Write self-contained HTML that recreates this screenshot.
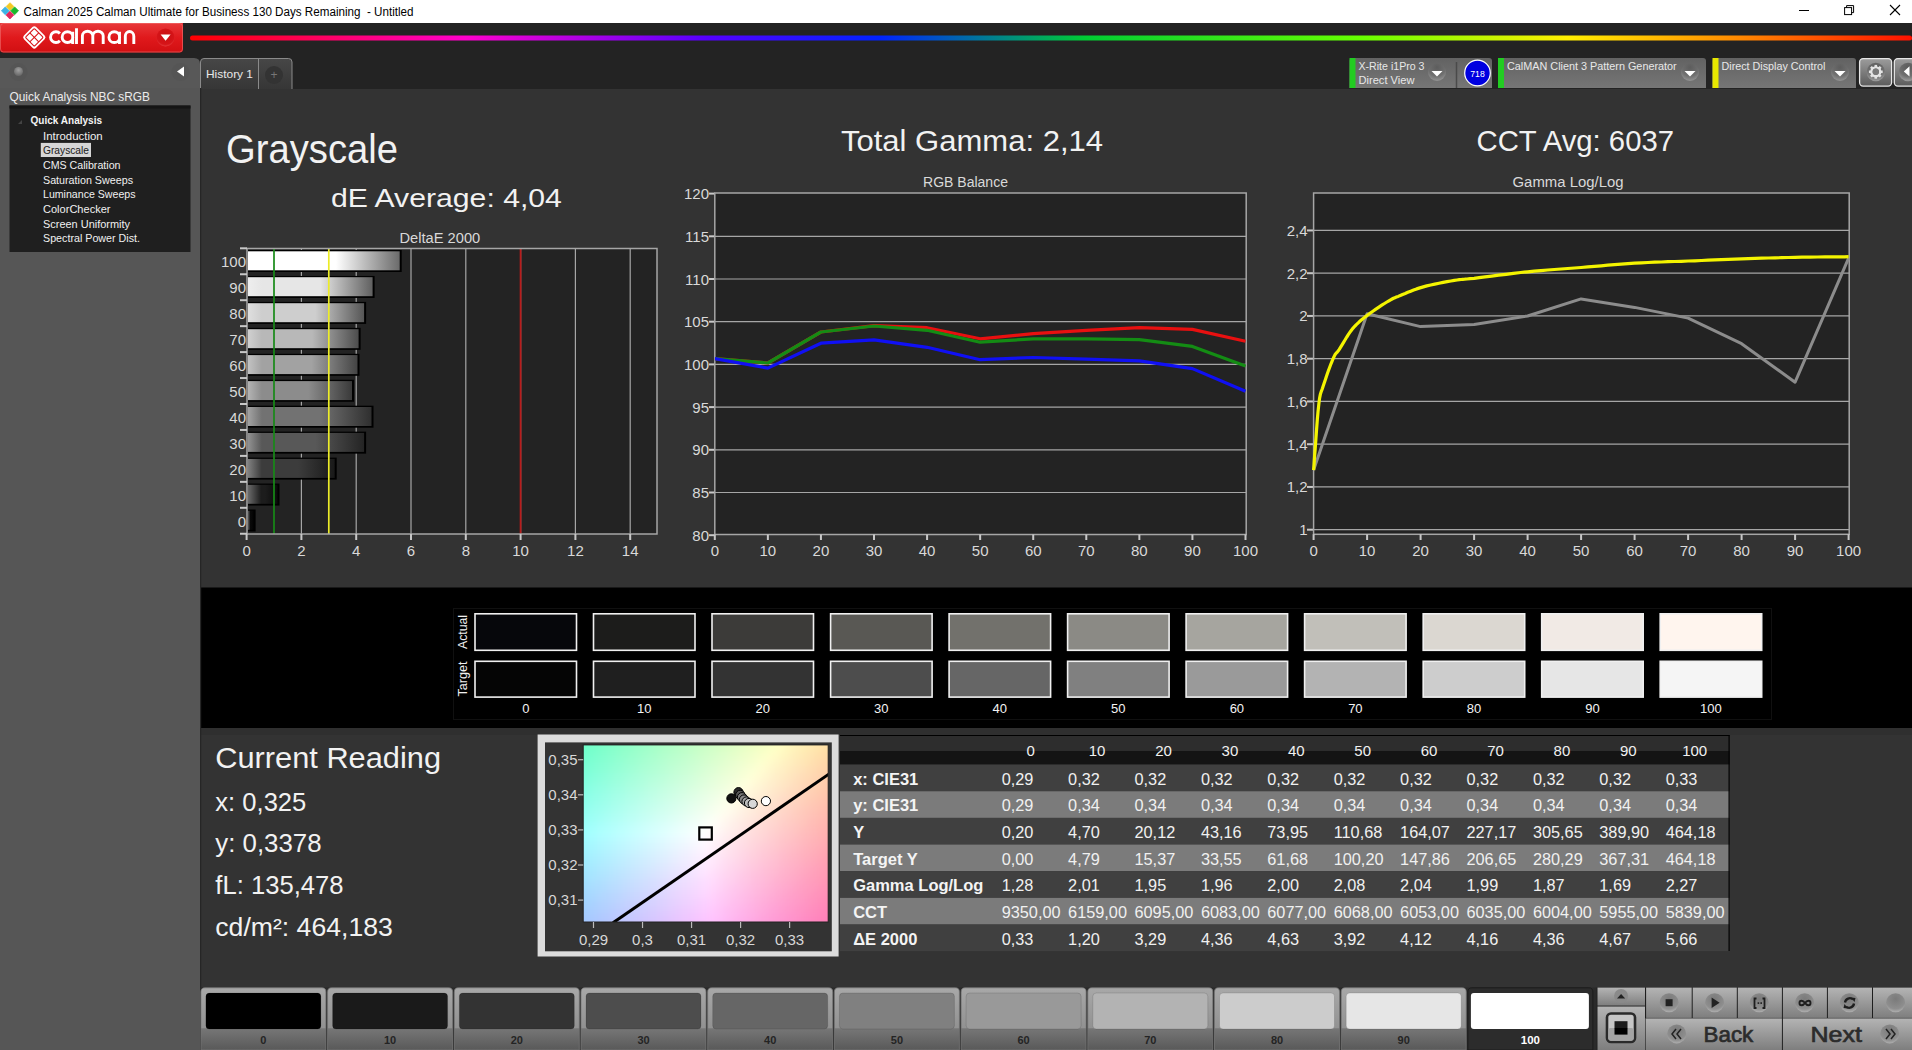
<!DOCTYPE html>
<html><head><meta charset="utf-8"><title>Calman</title>
<style>html,body{margin:0;padding:0;background:#333;overflow:hidden;width:1912px;height:1050px}svg{display:block}text{font-family:"Liberation Sans", sans-serif}</style>
</head><body><svg width="1912" height="1050" viewBox="0 0 1912 1050" font-family='"Liberation Sans", sans-serif'><defs>
<linearGradient id="rainbow" x1="0" x2="1" y1="0" y2="0">
 <stop offset="0" stop-color="#ff0000"/>
 <stop offset="0.16" stop-color="#ff00cc"/>
 <stop offset="0.30" stop-color="#5500ff"/>
 <stop offset="0.40" stop-color="#0022ff"/>
 <stop offset="0.52" stop-color="#00cc33"/>
 <stop offset="0.68" stop-color="#66ff00"/>
 <stop offset="0.80" stop-color="#ffee00"/>
 <stop offset="0.90" stop-color="#ff8800"/>
 <stop offset="1" stop-color="#ff1100"/>
</linearGradient>
<linearGradient id="redlogo" x1="0" x2="0" y1="0" y2="1">
 <stop offset="0" stop-color="#e8383a"/>
 <stop offset="0.5" stop-color="#e0191c"/>
 <stop offset="1" stop-color="#d10f12"/>
</linearGradient>
<linearGradient id="devbtn" x1="0" x2="0" y1="0" y2="1">
 <stop offset="0" stop-color="#626262"/>
 <stop offset="1" stop-color="#767676"/>
</linearGradient>
<linearGradient id="swbtn" x1="0" x2="0" y1="0" y2="1">
 <stop offset="0" stop-color="#a8a8a8"/>
 <stop offset="0.64" stop-color="#929292"/>
 <stop offset="0.66" stop-color="#767676"/>
 <stop offset="1" stop-color="#595959"/>
</linearGradient>
<linearGradient id="ctlbtn" x1="0" x2="0" y1="0" y2="1">
 <stop offset="0" stop-color="#b4b4b4"/>
 <stop offset="1" stop-color="#7e7e7e"/>
</linearGradient>
<radialGradient id="knob" cx="0.5" cy="0.35" r="0.6">
 <stop offset="0" stop-color="#a0a0a0"/>
 <stop offset="1" stop-color="#6a6a6a"/>
</radialGradient>
<radialGradient id="redknob" cx="0.5" cy="0.4" r="0.6">
 <stop offset="0" stop-color="#c80f12"/><stop offset="0.8" stop-color="#d61418"/><stop offset="1" stop-color="#e53a3c"/>
</radialGradient>
<linearGradient id="tabg" x1="0" x2="0" y1="0" y2="1">
 <stop offset="0" stop-color="#474747"/><stop offset="1" stop-color="#363636"/>
</linearGradient>
<radialGradient id="knob2" cx="0.5" cy="0.3" r="0.75">
 <stop offset="0" stop-color="#7a7a7a"/><stop offset="0.7" stop-color="#8e8e8e"/><stop offset="1" stop-color="#b8b8b8"/>
</radialGradient>
<linearGradient id="cie" x1="0" x2="1" y1="0" y2="0">
 <stop offset="0" stop-color="#8ff0b0"/>
 <stop offset="1" stop-color="#ffd8b0"/>
</linearGradient>
<linearGradient id="gearbtn" x1="0" x2="0" y1="0" y2="1"><stop offset="0" stop-color="#9c9c9c"/><stop offset="1" stop-color="#5c5c5c"/></linearGradient><radialGradient id="knob3" cx="0.5" cy="0.25" r="0.8"><stop offset="0" stop-color="#5a5a5a"/><stop offset="0.6" stop-color="#707070"/><stop offset="1" stop-color="#a6a6a6"/></radialGradient><linearGradient id="bar0" gradientUnits="userSpaceOnUse" x1="248" x2="253.6" y1="0" y2="0"><stop offset="0" stop-color="#5e5e5e"/><stop offset="0.450" stop-color="#080808"/><stop offset="0.58" stop-color="#080808"/><stop offset="1" stop-color="#030303"/></linearGradient><linearGradient id="bar1" gradientUnits="userSpaceOnUse" x1="248" x2="277.5" y1="0" y2="0"><stop offset="0" stop-color="#6b6b6b"/><stop offset="0.445" stop-color="#1c1c1c"/><stop offset="0.58" stop-color="#1c1c1c"/><stop offset="1" stop-color="#0b0b0b"/></linearGradient><linearGradient id="bar2" gradientUnits="userSpaceOnUse" x1="248" x2="334.7" y1="0" y2="0"><stop offset="0" stop-color="#808080"/><stop offset="0.158" stop-color="#3c3c3c"/><stop offset="0.58" stop-color="#3c3c3c"/><stop offset="1" stop-color="#191919"/></linearGradient><linearGradient id="bar3" gradientUnits="userSpaceOnUse" x1="248" x2="364.1" y1="0" y2="0"><stop offset="0" stop-color="#929292"/><stop offset="0.119" stop-color="#585858"/><stop offset="0.58" stop-color="#585858"/><stop offset="1" stop-color="#242424"/></linearGradient><linearGradient id="bar4" gradientUnits="userSpaceOnUse" x1="248" x2="371.5" y1="0" y2="0"><stop offset="0" stop-color="#a3a3a3"/><stop offset="0.112" stop-color="#727272"/><stop offset="0.58" stop-color="#727272"/><stop offset="1" stop-color="#2f2f2f"/></linearGradient><linearGradient id="bar5" gradientUnits="userSpaceOnUse" x1="248" x2="352.0" y1="0" y2="0"><stop offset="0" stop-color="#b4b4b4"/><stop offset="0.132" stop-color="#8c8c8c"/><stop offset="0.58" stop-color="#8c8c8c"/><stop offset="1" stop-color="#3a3a3a"/></linearGradient><linearGradient id="bar6" gradientUnits="userSpaceOnUse" x1="248" x2="357.5" y1="0" y2="0"><stop offset="0" stop-color="#c2c2c2"/><stop offset="0.126" stop-color="#a2a2a2"/><stop offset="0.58" stop-color="#a2a2a2"/><stop offset="1" stop-color="#444444"/></linearGradient><linearGradient id="bar7" gradientUnits="userSpaceOnUse" x1="248" x2="358.6" y1="0" y2="0"><stop offset="0" stop-color="#d0d0d0"/><stop offset="0.124" stop-color="#b8b8b8"/><stop offset="0.58" stop-color="#b8b8b8"/><stop offset="1" stop-color="#4d4d4d"/></linearGradient><linearGradient id="bar8" gradientUnits="userSpaceOnUse" x1="248" x2="364.1" y1="0" y2="0"><stop offset="0" stop-color="#dfdfdf"/><stop offset="0.119" stop-color="#cecece"/><stop offset="0.58" stop-color="#cecece"/><stop offset="1" stop-color="#565656"/></linearGradient><linearGradient id="bar9" gradientUnits="userSpaceOnUse" x1="248" x2="372.6" y1="0" y2="0"><stop offset="0" stop-color="#eeeeee"/><stop offset="0.111" stop-color="#e6e6e6"/><stop offset="0.58" stop-color="#e6e6e6"/><stop offset="1" stop-color="#606060"/></linearGradient><linearGradient id="bar10" gradientUnits="userSpaceOnUse" x1="248" x2="399.7" y1="0" y2="0"><stop offset="0" stop-color="#ffffff"/><stop offset="0.091" stop-color="#ffffff"/><stop offset="0.58" stop-color="#ffffff"/><stop offset="1" stop-color="#6b6b6b"/></linearGradient></defs><rect x="0" y="0" width="1912" height="1050" fill="#333333" /><rect x="0" y="0" width="1912" height="23" fill="#ffffff" /><rect x="0" y="23" width="1912" height="35" fill="#232323" /><rect x="0" y="58" width="200" height="992" fill="#565656" /><rect x="200" y="58" width="1712" height="31" fill="#232323" /><path d="M10 2.6999999999999997 L13.9 6.6 L10 10.5 L6.1 6.6 Z" fill="#f2c925" stroke="#f2c925" stroke-width="0.8" stroke-linejoin="round"/><path d="M5.3 6.9 L9.2 10.8 L5.3 14.700000000000001 L1.4 10.8 Z" fill="#3cb4e6" stroke="#3cb4e6" stroke-width="0.8" stroke-linejoin="round"/><path d="M14.6 6.9 L18.5 10.8 L14.6 14.700000000000001 L10.7 10.8 Z" fill="#19b82a" stroke="#19b82a" stroke-width="0.8" stroke-linejoin="round"/><path d="M9.9 11.2 L13.8 15.1 L9.9 19.0 L6.0 15.1 Z" fill="#e0285e" stroke="#e0285e" stroke-width="0.8" stroke-linejoin="round"/><text x="23.5" y="15.5" font-size="12" fill="#000" text-anchor="start" font-weight="normal" textLength="390" lengthAdjust="spacingAndGlyphs" >Calman 2025 Calman Ultimate for Business 130 Days Remaining&#160;&#160;- Untitled</text><line x1="1799" y1="10.5" x2="1809" y2="10.5" stroke="#000" stroke-width="1" /><rect x="1844.6" y="7.6" width="7" height="7" fill="none" stroke="#000" stroke-width="1"/><path d="M1846.6 7.6 V5.6 H1853.6 V12.6 H1851.6" fill="none" stroke="#000" stroke-width="1"/><line x1="1890" y1="5" x2="1900" y2="15" stroke="#000" stroke-width="1.1" /><line x1="1900" y1="5" x2="1890" y2="15" stroke="#000" stroke-width="1.1" /><path d="M0 23 H183 V49 Q183 52.5 179.5 52.5 H3 Q0 52.5 0 49 Z" fill="url(#redlogo)"/><rect x="0.5" y="23.5" width="182" height="28.5" rx="3" fill="none" stroke="#f07070" stroke-opacity="0.6" stroke-width="1"/><g transform="translate(34.3,37.4) rotate(45)"><rect x="-8.6" y="-8.6" width="17.2" height="17.2" rx="2.6" fill="#fff"/><rect x="-6.3" y="-6.3" width="12.6" height="12.6" rx="1" fill="none" stroke="#d8161a" stroke-width="1.1"/><line x1="0" y1="-6.3" x2="0" y2="6.3" stroke="#d8161a" stroke-width="1.1"/><line x1="-6.3" y1="0" x2="6.3" y2="0" stroke="#d8161a" stroke-width="1.1"/></g><path d="M59.88 33.57 A5.35 5.35 0 1 0 59.88 40.73 M67.5 37.15 m-5.35 0 a5.35 5.35 0 1 0 10.7 0 a5.35 5.35 0 1 0 -10.7 0 M72.7 31.65 V43.9 M114.3 37.15 m-5.35 0 a5.35 5.35 0 1 0 10.7 0 a5.35 5.35 0 1 0 -10.7 0 M119.5 31.65 V43.9 M76.5 28.3 V43.9 M82.4 43.9 V35.849999999999994 a5.2 4.6 0 0 1 10.4 0 V43.9 M92.8 35.849999999999994 a5.2 4.6 0 0 1 10.4 0 V43.9 M125.3 43.9 V36.15 a4.25 4.6 0 0 1 8.5 0 V43.9" fill="none" stroke="#fff" stroke-width="2.9" stroke-linecap="butt"/><circle cx="165.5" cy="37.5" r="9" fill="url(#redknob)"/><path d="M160.6 34.6 H170.6 L165.6 40.8 Z" fill="#fff"/><rect x="190" y="35.5" width="1722" height="5" rx="2.5" fill="url(#rainbow)"/><path d="M0 58 H194 Q200 58 200 64 V88 H0 Z" fill="#585858"/><rect x="194" y="58" width="6" height="6" fill="#232323"/><path d="M194 58 Q200 58 200 64 V88 H194 Z" fill="#585858"/><circle cx="18.5" cy="72" r="9" fill="#555"/><circle cx="18.5" cy="71.5" r="4.5" fill="url(#knob)"/><circle cx="180.5" cy="72" r="9" fill="#555"/><path d="M177 71.5 L184 66.5 V76.5 Z" fill="#fff"/><text x="9.5" y="101" font-size="13" fill="#ebebeb" text-anchor="start" font-weight="normal" textLength="140.5" lengthAdjust="spacingAndGlyphs" >Quick Analysis NBC sRGB</text><rect x="9.5" y="105.5" width="181" height="146.5" fill="#1f1f1f" /><rect x="9.5" y="105.5" width="181" height="3" fill="#151515" /><path d="M18 124 L22 120 L22 124 Z" fill="#444"/><text x="30.5" y="123.5" font-size="11" fill="#f4f4f4" text-anchor="start" font-weight="bold" textLength="71.5" lengthAdjust="spacingAndGlyphs" >Quick Analysis</text><text x="43" y="139.7" font-size="11" fill="#f0f0f0" text-anchor="start" font-weight="normal" textLength="59.6" lengthAdjust="spacingAndGlyphs" >Introduction</text><rect x="40.8" y="142.9" width="50.2" height="14.1" fill="#d6d6d6" /><text x="43" y="154.35" font-size="11" fill="#202020" text-anchor="start" font-weight="normal" textLength="46" lengthAdjust="spacingAndGlyphs" >Grayscale</text><text x="43" y="169.0" font-size="11" fill="#f0f0f0" text-anchor="start" font-weight="normal" textLength="77.5" lengthAdjust="spacingAndGlyphs" >CMS Calibration</text><text x="43" y="183.64999999999998" font-size="11" fill="#f0f0f0" text-anchor="start" font-weight="normal" textLength="90" lengthAdjust="spacingAndGlyphs" >Saturation Sweeps</text><text x="43" y="198.29999999999998" font-size="11" fill="#f0f0f0" text-anchor="start" font-weight="normal" textLength="92.5" lengthAdjust="spacingAndGlyphs" >Luminance Sweeps</text><text x="43" y="212.95" font-size="11" fill="#f0f0f0" text-anchor="start" font-weight="normal" textLength="67.5" lengthAdjust="spacingAndGlyphs" >ColorChecker</text><text x="43" y="227.6" font-size="11" fill="#f0f0f0" text-anchor="start" font-weight="normal" textLength="87" lengthAdjust="spacingAndGlyphs" >Screen Uniformity</text><text x="43" y="242.25" font-size="11" fill="#f0f0f0" text-anchor="start" font-weight="normal" textLength="97" lengthAdjust="spacingAndGlyphs" >Spectral Power Dist.</text><path d="M200.5 89 V62 Q200.5 58.5 204 58.5 H288.5 Q292 58.5 292 62 V89" fill="url(#tabg)" stroke="#8a8a8a" stroke-width="1"/><line x1="258.5" y1="59" x2="258.5" y2="89" stroke="#8a8a8a" stroke-width="1" /><text x="206" y="77.5" font-size="11.5" fill="#e8e8e8" text-anchor="start" font-weight="normal" textLength="47" lengthAdjust="spacingAndGlyphs" >History 1</text><circle cx="274" cy="75" r="9" fill="#333"/><text x="274" y="79" font-size="12" fill="#777" text-anchor="middle" font-weight="normal" >+</text><path d="M1349.5 88 V61 Q1349.5 58 1352.5 58 H1489 Q1492 58 1492 61 V88 Z" fill="url(#devbtn)"/><rect x="1349.5" y="58" width="6" height="30" fill="#22cc22" /><text x="1358.5" y="70" font-size="11.5" fill="#e8e8e8" text-anchor="start" font-weight="normal" textLength="66" lengthAdjust="spacingAndGlyphs" >X-Rite i1Pro 3</text><text x="1358.5" y="84" font-size="11.5" fill="#e8e8e8" text-anchor="start" font-weight="normal" textLength="56" lengthAdjust="spacingAndGlyphs" >Direct View</text><circle cx="1437" cy="72" r="9" fill="url(#knob3)" opacity="0.8"/><path d="M1431.5 71 H1442.5 L1437 76.5 Z" fill="#fff"/><line x1="1456.5" y1="62" x2="1456.5" y2="88" stroke="#4a4a4a" stroke-width="1.5" /><circle cx="1477.5" cy="73" r="12.8" fill="#0000e0" stroke="#fff" stroke-width="1.2"/><text x="1477.5" y="76.5" font-size="9" fill="#fff" text-anchor="middle" font-weight="normal" textLength="14.5" lengthAdjust="spacingAndGlyphs" >718</text><path d="M1498 88 V61 Q1498 58 1501 58 H1703 Q1706 58 1706 61 V88 Z" fill="url(#devbtn)"/><rect x="1498" y="58" width="6" height="30" fill="#22cc22" /><text x="1507" y="70" font-size="11.5" fill="#e8e8e8" text-anchor="start" font-weight="normal" textLength="169.7" lengthAdjust="spacingAndGlyphs" >CalMAN Client 3 Pattern Generator</text><circle cx="1690" cy="72" r="9" fill="url(#knob3)" opacity="0.8"/><path d="M1684.5 71 H1695.5 L1690 76.5 Z" fill="#fff"/><path d="M1712.5 88 V61 Q1712.5 58 1715.5 58 H1853 Q1856 58 1856 61 V88 Z" fill="url(#devbtn)"/><rect x="1712.5" y="58" width="6" height="30" fill="#e8e800" /><text x="1721.5" y="70" font-size="11.5" fill="#e8e8e8" text-anchor="start" font-weight="normal" textLength="104" lengthAdjust="spacingAndGlyphs" >Direct Display Control</text><circle cx="1840" cy="72" r="9" fill="url(#knob3)" opacity="0.8"/><path d="M1834.5 71 H1845.5 L1840 76.5 Z" fill="#fff"/><rect x="1859.6" y="58.6" width="32" height="27.5" rx="3.5" fill="url(#gearbtn)" stroke="#e6e6e6" stroke-width="1.3"/><circle cx="1875.8" cy="72" r="9.2" fill="url(#knob3)"/><g transform="translate(1875.8,71.8)"><rect x="-1.3" y="-6.9" width="2.6" height="3" fill="#e4e4e4" transform="rotate(0)"/><rect x="-1.3" y="-6.9" width="2.6" height="3" fill="#e4e4e4" transform="rotate(45)"/><rect x="-1.3" y="-6.9" width="2.6" height="3" fill="#e4e4e4" transform="rotate(90)"/><rect x="-1.3" y="-6.9" width="2.6" height="3" fill="#e4e4e4" transform="rotate(135)"/><rect x="-1.3" y="-6.9" width="2.6" height="3" fill="#e4e4e4" transform="rotate(180)"/><rect x="-1.3" y="-6.9" width="2.6" height="3" fill="#e4e4e4" transform="rotate(225)"/><rect x="-1.3" y="-6.9" width="2.6" height="3" fill="#e4e4e4" transform="rotate(270)"/><rect x="-1.3" y="-6.9" width="2.6" height="3" fill="#e4e4e4" transform="rotate(315)"/><circle r="4.4" fill="none" stroke="#e4e4e4" stroke-width="2.4"/><circle r="3.2" fill="#7a7a7a"/></g><rect x="1894.3" y="58.6" width="25" height="27.5" rx="3.5" fill="url(#gearbtn)" stroke="#e6e6e6" stroke-width="1.3"/><circle cx="1908" cy="72" r="9.2" fill="url(#knob3)"/><path d="M1903.8 71.4 L1909.5 66.3 V76.5 Z" fill="#fff"/><text x="226" y="163.2" font-size="40.5" fill="#f2f2f2" text-anchor="start" font-weight="normal" textLength="172" lengthAdjust="spacingAndGlyphs" >Grayscale</text><text x="330.9" y="207" font-size="26.7" fill="#f2f2f2" text-anchor="start" font-weight="normal" textLength="231" lengthAdjust="spacingAndGlyphs" >dE Average: 4,04</text><text x="841" y="150.9" font-size="29.7" fill="#f2f2f2" text-anchor="start" font-weight="normal" textLength="262" lengthAdjust="spacingAndGlyphs" >Total Gamma: 2,14</text><text x="1476.5" y="151" font-size="29.7" fill="#f2f2f2" text-anchor="start" font-weight="normal" textLength="197.5" lengthAdjust="spacingAndGlyphs" >CCT Avg: 6037</text><text x="399.5" y="242.6" font-size="14.7" fill="#d9d9d9" text-anchor="start" font-weight="normal" textLength="80.7" lengthAdjust="spacingAndGlyphs" >DeltaE 2000</text><text x="923" y="186.8" font-size="14.7" fill="#d9d9d9" text-anchor="start" font-weight="normal" textLength="85" lengthAdjust="spacingAndGlyphs" >RGB Balance</text><text x="1512.5" y="187" font-size="14.7" fill="#d9d9d9" text-anchor="start" font-weight="normal" textLength="111" lengthAdjust="spacingAndGlyphs" >Gamma Log/Log</text><rect x="247" y="248.5" width="410" height="285.5" fill="#232323" /><line x1="301.4" y1="248.5" x2="301.4" y2="534" stroke="#a6a6a6" stroke-width="1.2" /><line x1="356.2" y1="248.5" x2="356.2" y2="534" stroke="#a6a6a6" stroke-width="1.2" /><line x1="411.0" y1="248.5" x2="411.0" y2="534" stroke="#a6a6a6" stroke-width="1.2" /><line x1="465.79999999999995" y1="248.5" x2="465.79999999999995" y2="534" stroke="#a6a6a6" stroke-width="1.2" /><line x1="520.6" y1="248.5" x2="520.6" y2="534" stroke="#a6a6a6" stroke-width="1.2" /><line x1="575.4" y1="248.5" x2="575.4" y2="534" stroke="#a6a6a6" stroke-width="1.2" /><line x1="630.1999999999999" y1="248.5" x2="630.1999999999999" y2="534" stroke="#a6a6a6" stroke-width="1.2" /><rect x="248" y="509.5" width="7.6" height="22" fill="#000" /><rect x="248" y="510.8" width="5.6" height="19" fill="url(#bar0)" /><rect x="248" y="483.54999999999995" width="31.5" height="22" fill="#000" /><rect x="248" y="484.8" width="29.5" height="19" fill="url(#bar1)" /><rect x="248" y="457.6" width="88.7" height="22" fill="#000" /><rect x="248" y="458.9" width="86.7" height="19" fill="url(#bar2)" /><rect x="248" y="431.65" width="118.1" height="22" fill="#000" /><rect x="248" y="432.9" width="116.1" height="19" fill="url(#bar3)" /><rect x="248" y="405.7" width="125.5" height="22" fill="#000" /><rect x="248" y="407.0" width="123.5" height="19" fill="url(#bar4)" /><rect x="248" y="379.75" width="106.0" height="22" fill="#000" /><rect x="248" y="381.1" width="104.0" height="19" fill="url(#bar5)" /><rect x="248" y="353.8" width="111.5" height="22" fill="#000" /><rect x="248" y="355.1" width="109.5" height="19" fill="url(#bar6)" /><rect x="248" y="327.85" width="112.6" height="22" fill="#000" /><rect x="248" y="329.2" width="110.6" height="19" fill="url(#bar7)" /><rect x="248" y="301.9" width="118.1" height="22" fill="#000" /><rect x="248" y="303.2" width="116.1" height="19" fill="url(#bar8)" /><rect x="248" y="275.95" width="126.6" height="22" fill="#000" /><rect x="248" y="277.2" width="124.6" height="19" fill="url(#bar9)" /><rect x="248" y="250.0" width="153.7" height="22" fill="#000" /><rect x="248" y="251.3" width="151.7" height="19" fill="url(#bar10)" /><line x1="274.0" y1="248.5" x2="274.0" y2="534" stroke="#178a17" stroke-width="1.7" /><line x1="328.79999999999995" y1="248.5" x2="328.79999999999995" y2="534" stroke="#ecec28" stroke-width="1.7" /><line x1="520.6" y1="248.5" x2="520.6" y2="534" stroke="#b81c1c" stroke-width="1.8" /><rect x="247" y="248.5" width="410" height="285.5" fill="none" stroke="#a6a6a6" stroke-width="1.5"/><line x1="240" y1="248.3" x2="247" y2="248.3" stroke="#c8c8c8" stroke-width="2" /><line x1="240" y1="274.25" x2="247" y2="274.25" stroke="#c8c8c8" stroke-width="2" /><line x1="240" y1="300.2" x2="247" y2="300.2" stroke="#c8c8c8" stroke-width="2" /><line x1="240" y1="326.15" x2="247" y2="326.15" stroke="#c8c8c8" stroke-width="2" /><line x1="240" y1="352.1" x2="247" y2="352.1" stroke="#c8c8c8" stroke-width="2" /><line x1="240" y1="378.05" x2="247" y2="378.05" stroke="#c8c8c8" stroke-width="2" /><line x1="240" y1="404.0" x2="247" y2="404.0" stroke="#c8c8c8" stroke-width="2" /><line x1="240" y1="429.95000000000005" x2="247" y2="429.95000000000005" stroke="#c8c8c8" stroke-width="2" /><line x1="240" y1="455.9" x2="247" y2="455.9" stroke="#c8c8c8" stroke-width="2" /><line x1="240" y1="481.85" x2="247" y2="481.85" stroke="#c8c8c8" stroke-width="2" /><line x1="240" y1="507.8" x2="247" y2="507.8" stroke="#c8c8c8" stroke-width="2" /><line x1="240" y1="533.75" x2="247" y2="533.75" stroke="#c8c8c8" stroke-width="2" /><text x="246" y="526.7" font-size="15" fill="#d9d9d9" text-anchor="end" font-weight="normal" >0</text><text x="246" y="500.74999999999994" font-size="15" fill="#d9d9d9" text-anchor="end" font-weight="normal" >10</text><text x="246" y="474.8" font-size="15" fill="#d9d9d9" text-anchor="end" font-weight="normal" >20</text><text x="246" y="448.84999999999997" font-size="15" fill="#d9d9d9" text-anchor="end" font-weight="normal" >30</text><text x="246" y="422.9" font-size="15" fill="#d9d9d9" text-anchor="end" font-weight="normal" >40</text><text x="246" y="396.95" font-size="15" fill="#d9d9d9" text-anchor="end" font-weight="normal" >50</text><text x="246" y="371.0" font-size="15" fill="#d9d9d9" text-anchor="end" font-weight="normal" >60</text><text x="246" y="345.05" font-size="15" fill="#d9d9d9" text-anchor="end" font-weight="normal" >70</text><text x="246" y="319.09999999999997" font-size="15" fill="#d9d9d9" text-anchor="end" font-weight="normal" >80</text><text x="246" y="293.15" font-size="15" fill="#d9d9d9" text-anchor="end" font-weight="normal" >90</text><text x="246" y="267.2" font-size="15" fill="#d9d9d9" text-anchor="end" font-weight="normal" >100</text><line x1="246.6" y1="534" x2="246.6" y2="540" stroke="#c8c8c8" stroke-width="2" /><text x="246.6" y="556" font-size="15" fill="#d9d9d9" text-anchor="middle" font-weight="normal" >0</text><line x1="301.4" y1="534" x2="301.4" y2="540" stroke="#c8c8c8" stroke-width="2" /><text x="301.4" y="556" font-size="15" fill="#d9d9d9" text-anchor="middle" font-weight="normal" >2</text><line x1="356.2" y1="534" x2="356.2" y2="540" stroke="#c8c8c8" stroke-width="2" /><text x="356.2" y="556" font-size="15" fill="#d9d9d9" text-anchor="middle" font-weight="normal" >4</text><line x1="411.0" y1="534" x2="411.0" y2="540" stroke="#c8c8c8" stroke-width="2" /><text x="411.0" y="556" font-size="15" fill="#d9d9d9" text-anchor="middle" font-weight="normal" >6</text><line x1="465.79999999999995" y1="534" x2="465.79999999999995" y2="540" stroke="#c8c8c8" stroke-width="2" /><text x="465.79999999999995" y="556" font-size="15" fill="#d9d9d9" text-anchor="middle" font-weight="normal" >8</text><line x1="520.6" y1="534" x2="520.6" y2="540" stroke="#c8c8c8" stroke-width="2" /><text x="520.6" y="556" font-size="15" fill="#d9d9d9" text-anchor="middle" font-weight="normal" >10</text><line x1="575.4" y1="534" x2="575.4" y2="540" stroke="#c8c8c8" stroke-width="2" /><text x="575.4" y="556" font-size="15" fill="#d9d9d9" text-anchor="middle" font-weight="normal" >12</text><line x1="630.1999999999999" y1="534" x2="630.1999999999999" y2="540" stroke="#c8c8c8" stroke-width="2" /><text x="630.1999999999999" y="556" font-size="15" fill="#d9d9d9" text-anchor="middle" font-weight="normal" >14</text><rect x="714.8" y="193" width="531.4000000000001" height="341.5" fill="#232323" /><line x1="709" y1="535.1999999999999" x2="714.8" y2="535.1999999999999" stroke="#c8c8c8" stroke-width="2" /><text x="709" y="540.6999999999999" font-size="15" fill="#d9d9d9" text-anchor="end" font-weight="normal" >80</text><line x1="714.8" y1="492.5" x2="1246.2" y2="492.5" stroke="#a6a6a6" stroke-width="1.2" /><line x1="709" y1="492.5" x2="714.8" y2="492.5" stroke="#c8c8c8" stroke-width="2" /><text x="709" y="498.0" font-size="15" fill="#d9d9d9" text-anchor="end" font-weight="normal" >85</text><line x1="714.8" y1="449.79999999999995" x2="1246.2" y2="449.79999999999995" stroke="#a6a6a6" stroke-width="1.2" /><line x1="709" y1="449.79999999999995" x2="714.8" y2="449.79999999999995" stroke="#c8c8c8" stroke-width="2" /><text x="709" y="455.29999999999995" font-size="15" fill="#d9d9d9" text-anchor="end" font-weight="normal" >90</text><line x1="714.8" y1="407.09999999999997" x2="1246.2" y2="407.09999999999997" stroke="#a6a6a6" stroke-width="1.2" /><line x1="709" y1="407.09999999999997" x2="714.8" y2="407.09999999999997" stroke="#c8c8c8" stroke-width="2" /><text x="709" y="412.59999999999997" font-size="15" fill="#d9d9d9" text-anchor="end" font-weight="normal" >95</text><line x1="714.8" y1="364.4" x2="1246.2" y2="364.4" stroke="#a6a6a6" stroke-width="1.2" /><line x1="709" y1="364.4" x2="714.8" y2="364.4" stroke="#c8c8c8" stroke-width="2" /><text x="709" y="369.9" font-size="15" fill="#d9d9d9" text-anchor="end" font-weight="normal" >100</text><line x1="714.8" y1="321.7" x2="1246.2" y2="321.7" stroke="#a6a6a6" stroke-width="1.2" /><line x1="709" y1="321.7" x2="714.8" y2="321.7" stroke="#c8c8c8" stroke-width="2" /><text x="709" y="327.2" font-size="15" fill="#d9d9d9" text-anchor="end" font-weight="normal" >105</text><line x1="714.8" y1="279.0" x2="1246.2" y2="279.0" stroke="#a6a6a6" stroke-width="1.2" /><line x1="709" y1="279.0" x2="714.8" y2="279.0" stroke="#c8c8c8" stroke-width="2" /><text x="709" y="284.5" font-size="15" fill="#d9d9d9" text-anchor="end" font-weight="normal" >110</text><line x1="714.8" y1="236.29999999999998" x2="1246.2" y2="236.29999999999998" stroke="#a6a6a6" stroke-width="1.2" /><line x1="709" y1="236.29999999999998" x2="714.8" y2="236.29999999999998" stroke="#c8c8c8" stroke-width="2" /><text x="709" y="241.79999999999998" font-size="15" fill="#d9d9d9" text-anchor="end" font-weight="normal" >115</text><line x1="709" y1="193.6" x2="714.8" y2="193.6" stroke="#c8c8c8" stroke-width="2" /><text x="709" y="199.1" font-size="15" fill="#d9d9d9" text-anchor="end" font-weight="normal" >120</text><rect x="714.8" y="193" width="531.4000000000001" height="341.5" fill="none" stroke="#a6a6a6" stroke-width="1.5"/><line x1="714.8" y1="534.5" x2="714.8" y2="540" stroke="#c8c8c8" stroke-width="2" /><text x="714.8" y="556" font-size="15" fill="#d9d9d9" text-anchor="middle" font-weight="normal" >0</text><line x1="767.87" y1="534.5" x2="767.87" y2="540" stroke="#c8c8c8" stroke-width="2" /><text x="767.87" y="556" font-size="15" fill="#d9d9d9" text-anchor="middle" font-weight="normal" >10</text><line x1="820.9399999999999" y1="534.5" x2="820.9399999999999" y2="540" stroke="#c8c8c8" stroke-width="2" /><text x="820.9399999999999" y="556" font-size="15" fill="#d9d9d9" text-anchor="middle" font-weight="normal" >20</text><line x1="874.01" y1="534.5" x2="874.01" y2="540" stroke="#c8c8c8" stroke-width="2" /><text x="874.01" y="556" font-size="15" fill="#d9d9d9" text-anchor="middle" font-weight="normal" >30</text><line x1="927.0799999999999" y1="534.5" x2="927.0799999999999" y2="540" stroke="#c8c8c8" stroke-width="2" /><text x="927.0799999999999" y="556" font-size="15" fill="#d9d9d9" text-anchor="middle" font-weight="normal" >40</text><line x1="980.15" y1="534.5" x2="980.15" y2="540" stroke="#c8c8c8" stroke-width="2" /><text x="980.15" y="556" font-size="15" fill="#d9d9d9" text-anchor="middle" font-weight="normal" >50</text><line x1="1033.22" y1="534.5" x2="1033.22" y2="540" stroke="#c8c8c8" stroke-width="2" /><text x="1033.22" y="556" font-size="15" fill="#d9d9d9" text-anchor="middle" font-weight="normal" >60</text><line x1="1086.29" y1="534.5" x2="1086.29" y2="540" stroke="#c8c8c8" stroke-width="2" /><text x="1086.29" y="556" font-size="15" fill="#d9d9d9" text-anchor="middle" font-weight="normal" >70</text><line x1="1139.3600000000001" y1="534.5" x2="1139.3600000000001" y2="540" stroke="#c8c8c8" stroke-width="2" /><text x="1139.3600000000001" y="556" font-size="15" fill="#d9d9d9" text-anchor="middle" font-weight="normal" >80</text><line x1="1192.43" y1="534.5" x2="1192.43" y2="540" stroke="#c8c8c8" stroke-width="2" /><text x="1192.43" y="556" font-size="15" fill="#d9d9d9" text-anchor="middle" font-weight="normal" >90</text><line x1="1245.5" y1="534.5" x2="1245.5" y2="540" stroke="#c8c8c8" stroke-width="2" /><text x="1245.5" y="556" font-size="15" fill="#d9d9d9" text-anchor="middle" font-weight="normal" >100</text><clipPath id="rgbclip"><rect x="714.8" y="193" width="531.4000000000001" height="341.5"/></clipPath><g clip-path="url(#rgbclip)"><polyline points="714.8,358.6 767.9,363.0 820.9,332.0 874.0,325.6 927.1,327.7 980.1,338.8 1033.2,333.7 1086.3,330.3 1139.4,327.7 1192.4,329.4 1245.5,341.3" fill="none" stroke="#e81010" stroke-width="3.2" stroke-linejoin="round"/><polyline points="714.8,358.6 767.9,363.0 820.9,332.0 874.0,326.0 927.1,330.3 980.1,342.2 1033.2,338.8 1086.3,338.8 1139.4,339.6 1192.4,346.4 1245.5,366.1" fill="none" stroke="#148c14" stroke-width="3.2" stroke-linejoin="round"/><polyline points="714.8,358.6 767.9,368.1 820.9,343.2 874.0,339.8 927.1,347.3 980.1,359.7 1033.2,357.5 1086.3,359.2 1139.4,360.9 1192.4,368.6 1245.5,391.2" fill="none" stroke="#1010f4" stroke-width="3.2" stroke-linejoin="round"/></g><rect x="1313.6" y="193" width="535.6000000000001" height="341.29999999999995" fill="#232323" /><line x1="1313.6" y1="529.7" x2="1849.2" y2="529.7" stroke="#a6a6a6" stroke-width="1.2" /><line x1="1307" y1="529.7" x2="1313.6" y2="529.7" stroke="#c8c8c8" stroke-width="2" /><text x="1307.5" y="535.2" font-size="15" fill="#d9d9d9" text-anchor="end" font-weight="normal" >1</text><line x1="1313.6" y1="486.95000000000005" x2="1849.2" y2="486.95000000000005" stroke="#a6a6a6" stroke-width="1.2" /><line x1="1307" y1="486.95000000000005" x2="1313.6" y2="486.95000000000005" stroke="#c8c8c8" stroke-width="2" /><text x="1307.5" y="492.45000000000005" font-size="15" fill="#d9d9d9" text-anchor="end" font-weight="normal" >1,2</text><line x1="1313.6" y1="444.20000000000005" x2="1849.2" y2="444.20000000000005" stroke="#a6a6a6" stroke-width="1.2" /><line x1="1307" y1="444.20000000000005" x2="1313.6" y2="444.20000000000005" stroke="#c8c8c8" stroke-width="2" /><text x="1307.5" y="449.70000000000005" font-size="15" fill="#d9d9d9" text-anchor="end" font-weight="normal" >1,4</text><line x1="1313.6" y1="401.45000000000005" x2="1849.2" y2="401.45000000000005" stroke="#a6a6a6" stroke-width="1.2" /><line x1="1307" y1="401.45000000000005" x2="1313.6" y2="401.45000000000005" stroke="#c8c8c8" stroke-width="2" /><text x="1307.5" y="406.95000000000005" font-size="15" fill="#d9d9d9" text-anchor="end" font-weight="normal" >1,6</text><line x1="1313.6" y1="358.70000000000005" x2="1849.2" y2="358.70000000000005" stroke="#a6a6a6" stroke-width="1.2" /><line x1="1307" y1="358.70000000000005" x2="1313.6" y2="358.70000000000005" stroke="#c8c8c8" stroke-width="2" /><text x="1307.5" y="364.20000000000005" font-size="15" fill="#d9d9d9" text-anchor="end" font-weight="normal" >1,8</text><line x1="1313.6" y1="315.95000000000005" x2="1849.2" y2="315.95000000000005" stroke="#a6a6a6" stroke-width="1.2" /><line x1="1307" y1="315.95000000000005" x2="1313.6" y2="315.95000000000005" stroke="#c8c8c8" stroke-width="2" /><text x="1307.5" y="321.45000000000005" font-size="15" fill="#d9d9d9" text-anchor="end" font-weight="normal" >2</text><line x1="1313.6" y1="273.2" x2="1849.2" y2="273.2" stroke="#a6a6a6" stroke-width="1.2" /><line x1="1307" y1="273.2" x2="1313.6" y2="273.2" stroke="#c8c8c8" stroke-width="2" /><text x="1307.5" y="278.7" font-size="15" fill="#d9d9d9" text-anchor="end" font-weight="normal" >2,2</text><line x1="1313.6" y1="230.45" x2="1849.2" y2="230.45" stroke="#a6a6a6" stroke-width="1.2" /><line x1="1307" y1="230.45" x2="1313.6" y2="230.45" stroke="#c8c8c8" stroke-width="2" /><text x="1307.5" y="235.95" font-size="15" fill="#d9d9d9" text-anchor="end" font-weight="normal" >2,4</text><rect x="1313.6" y="193" width="535.6000000000001" height="341.29999999999995" fill="none" stroke="#a6a6a6" stroke-width="1.5"/><line x1="1313.6" y1="534.3" x2="1313.6" y2="540" stroke="#c8c8c8" stroke-width="2" /><text x="1313.6" y="556" font-size="15" fill="#d9d9d9" text-anchor="middle" font-weight="normal" >0</text><line x1="1367.1" y1="534.3" x2="1367.1" y2="540" stroke="#c8c8c8" stroke-width="2" /><text x="1367.1" y="556" font-size="15" fill="#d9d9d9" text-anchor="middle" font-weight="normal" >10</text><line x1="1420.6" y1="534.3" x2="1420.6" y2="540" stroke="#c8c8c8" stroke-width="2" /><text x="1420.6" y="556" font-size="15" fill="#d9d9d9" text-anchor="middle" font-weight="normal" >20</text><line x1="1474.1" y1="534.3" x2="1474.1" y2="540" stroke="#c8c8c8" stroke-width="2" /><text x="1474.1" y="556" font-size="15" fill="#d9d9d9" text-anchor="middle" font-weight="normal" >30</text><line x1="1527.6" y1="534.3" x2="1527.6" y2="540" stroke="#c8c8c8" stroke-width="2" /><text x="1527.6" y="556" font-size="15" fill="#d9d9d9" text-anchor="middle" font-weight="normal" >40</text><line x1="1581.1" y1="534.3" x2="1581.1" y2="540" stroke="#c8c8c8" stroke-width="2" /><text x="1581.1" y="556" font-size="15" fill="#d9d9d9" text-anchor="middle" font-weight="normal" >50</text><line x1="1634.6" y1="534.3" x2="1634.6" y2="540" stroke="#c8c8c8" stroke-width="2" /><text x="1634.6" y="556" font-size="15" fill="#d9d9d9" text-anchor="middle" font-weight="normal" >60</text><line x1="1688.1" y1="534.3" x2="1688.1" y2="540" stroke="#c8c8c8" stroke-width="2" /><text x="1688.1" y="556" font-size="15" fill="#d9d9d9" text-anchor="middle" font-weight="normal" >70</text><line x1="1741.6" y1="534.3" x2="1741.6" y2="540" stroke="#c8c8c8" stroke-width="2" /><text x="1741.6" y="556" font-size="15" fill="#d9d9d9" text-anchor="middle" font-weight="normal" >80</text><line x1="1795.1" y1="534.3" x2="1795.1" y2="540" stroke="#c8c8c8" stroke-width="2" /><text x="1795.1" y="556" font-size="15" fill="#d9d9d9" text-anchor="middle" font-weight="normal" >90</text><line x1="1848.6" y1="534.3" x2="1848.6" y2="540" stroke="#c8c8c8" stroke-width="2" /><text x="1848.6" y="556" font-size="15" fill="#d9d9d9" text-anchor="middle" font-weight="normal" >100</text><polyline points="1313.6,469.9 1367.1,313.8 1420.6,326.6 1474.1,324.5 1527.6,316.0 1581.1,298.9 1634.6,307.4 1688.1,318.1 1741.6,343.7 1795.1,382.2 1848.6,258.2" fill="none" stroke="#8c8c8c" stroke-width="3" stroke-linejoin="round"/><polyline points="1313.6,470.1 1314.0,464.8 1314.5,457.4 1315.2,448.6 1315.9,438.9 1316.6,429.2 1317.3,419.9 1318.0,411.8 1318.7,405.4 1319.2,400.9 1319.7,397.6 1320.2,395.2 1320.6,393.4 1321.1,391.9 1321.7,390.4 1322.4,388.5 1323.2,386.0 1324.3,382.8 1325.5,379.2 1326.8,375.3 1328.2,371.3 1329.6,367.5 1331.0,363.8 1332.3,360.6 1333.4,358.0 1334.3,356.1 1335.0,354.7 1335.6,353.8 1336.2,353.2 1336.8,352.5 1337.5,351.8 1338.3,350.8 1339.3,349.4 1340.5,347.4 1341.9,345.1 1343.4,342.6 1345.0,340.0 1346.6,337.3 1348.3,334.6 1350.0,332.2 1351.6,330.0 1353.1,328.1 1354.7,326.3 1356.1,324.8 1357.7,323.3 1359.3,321.8 1361.0,320.3 1362.9,318.7 1365.0,317.1 1367.4,315.2 1370.0,313.2 1372.9,311.2 1375.9,309.1 1378.9,307.1 1381.8,305.2 1384.5,303.5 1386.9,302.0 1388.9,300.8 1390.6,299.8 1392.1,299.0 1393.5,298.3 1394.9,297.7 1396.4,297.1 1398.2,296.4 1400.3,295.5 1402.6,294.5 1405.2,293.5 1407.8,292.3 1410.7,291.2 1413.6,290.1 1416.7,288.9 1419.9,287.9 1423.3,286.9 1426.8,285.9 1430.7,285.0 1434.8,284.1 1439.0,283.2 1443.1,282.4 1447.1,281.7 1450.9,281.0 1454.3,280.4 1457.1,280.0 1459.3,279.7 1461.1,279.5 1462.8,279.3 1464.7,279.2 1467.0,279.0 1470.1,278.7 1474.1,278.3 1479.2,277.6 1485.1,276.9 1491.7,276.1 1498.7,275.2 1506.1,274.3 1513.4,273.4 1520.7,272.5 1527.6,271.8 1534.3,271.2 1541.0,270.6 1547.7,270.0 1554.3,269.5 1561.0,269.0 1567.7,268.5 1574.4,268.0 1581.1,267.5 1587.8,266.9 1594.5,266.4 1601.2,265.8 1607.8,265.2 1614.5,264.6 1621.2,264.1 1627.9,263.6 1634.6,263.2 1641.3,262.8 1648.0,262.5 1654.7,262.2 1661.3,262.0 1668.0,261.7 1674.7,261.5 1681.4,261.3 1688.1,261.0 1694.8,260.8 1701.5,260.5 1708.2,260.2 1714.8,259.9 1721.5,259.6 1728.2,259.4 1734.9,259.1 1741.6,258.9 1748.3,258.6 1755.0,258.4 1761.7,258.2 1768.3,258.0 1775.0,257.8 1781.7,257.7 1788.4,257.5 1795.1,257.4 1802.2,257.2 1809.7,257.1 1817.5,257.0 1825.2,256.9 1832.5,256.9 1839.0,256.8 1844.5,256.8 1848.6,256.7" fill="none" stroke="#f4f400" stroke-width="3.2" stroke-linejoin="round"/><rect x="200" y="587.5" width="1712" height="140.5" fill="#000" /><rect x="453.5" y="608.5" width="1318" height="111" fill="none" stroke="#101010" stroke-width="1"/><rect x="475.0" y="613.8" width="101.5" height="36.5" fill="#06070b" stroke="#f0f0f0" stroke-width="1.6"/><rect x="475.0" y="661.3" width="101.5" height="35.8" fill="#050505" stroke="#f0f0f0" stroke-width="1.6"/><text x="525.75" y="712.5" font-size="13" fill="#f4f4f4" text-anchor="middle" font-weight="normal" >0</text><rect x="593.5" y="613.8" width="101.5" height="36.5" fill="#1c1c1b" stroke="#f0f0f0" stroke-width="1.6"/><rect x="593.5" y="661.3" width="101.5" height="35.8" fill="#1f1f1f" stroke="#f0f0f0" stroke-width="1.6"/><text x="644.27" y="712.5" font-size="13" fill="#f4f4f4" text-anchor="middle" font-weight="normal" >10</text><rect x="712.0" y="613.8" width="101.5" height="36.5" fill="#3c3b39" stroke="#f0f0f0" stroke-width="1.6"/><rect x="712.0" y="661.3" width="101.5" height="35.8" fill="#333333" stroke="#f0f0f0" stroke-width="1.6"/><text x="762.79" y="712.5" font-size="13" fill="#f4f4f4" text-anchor="middle" font-weight="normal" >20</text><rect x="830.6" y="613.8" width="101.5" height="36.5" fill="#595854" stroke="#f0f0f0" stroke-width="1.6"/><rect x="830.6" y="661.3" width="101.5" height="35.8" fill="#4d4d4d" stroke="#f0f0f0" stroke-width="1.6"/><text x="881.31" y="712.5" font-size="13" fill="#f4f4f4" text-anchor="middle" font-weight="normal" >30</text><rect x="949.1" y="613.8" width="101.5" height="36.5" fill="#72716c" stroke="#f0f0f0" stroke-width="1.6"/><rect x="949.1" y="661.3" width="101.5" height="35.8" fill="#666666" stroke="#f0f0f0" stroke-width="1.6"/><text x="999.8299999999999" y="712.5" font-size="13" fill="#f4f4f4" text-anchor="middle" font-weight="normal" >40</text><rect x="1067.6" y="613.8" width="101.5" height="36.5" fill="#8b8a85" stroke="#f0f0f0" stroke-width="1.6"/><rect x="1067.6" y="661.3" width="101.5" height="35.8" fill="#808080" stroke="#f0f0f0" stroke-width="1.6"/><text x="1118.35" y="712.5" font-size="13" fill="#f4f4f4" text-anchor="middle" font-weight="normal" >50</text><rect x="1186.1" y="613.8" width="101.5" height="36.5" fill="#a6a59f" stroke="#f0f0f0" stroke-width="1.6"/><rect x="1186.1" y="661.3" width="101.5" height="35.8" fill="#9a9a9a" stroke="#f0f0f0" stroke-width="1.6"/><text x="1236.87" y="712.5" font-size="13" fill="#f4f4f4" text-anchor="middle" font-weight="normal" >60</text><rect x="1304.6" y="613.8" width="101.5" height="36.5" fill="#c1bfb9" stroke="#f0f0f0" stroke-width="1.6"/><rect x="1304.6" y="661.3" width="101.5" height="35.8" fill="#b3b3b3" stroke="#f0f0f0" stroke-width="1.6"/><text x="1355.3899999999999" y="712.5" font-size="13" fill="#f4f4f4" text-anchor="middle" font-weight="normal" >70</text><rect x="1423.2" y="613.8" width="101.5" height="36.5" fill="#dbd7d1" stroke="#f0f0f0" stroke-width="1.6"/><rect x="1423.2" y="661.3" width="101.5" height="35.8" fill="#cdcdcd" stroke="#f0f0f0" stroke-width="1.6"/><text x="1473.9099999999999" y="712.5" font-size="13" fill="#f4f4f4" text-anchor="middle" font-weight="normal" >80</text><rect x="1541.7" y="613.8" width="101.5" height="36.5" fill="#f1eae5" stroke="#f0f0f0" stroke-width="1.6"/><rect x="1541.7" y="661.3" width="101.5" height="35.8" fill="#e6e6e6" stroke="#f0f0f0" stroke-width="1.6"/><text x="1592.43" y="712.5" font-size="13" fill="#f4f4f4" text-anchor="middle" font-weight="normal" >90</text><rect x="1660.2" y="613.8" width="101.5" height="36.5" fill="#fff5ee" stroke="#f0f0f0" stroke-width="1.6"/><rect x="1660.2" y="661.3" width="101.5" height="35.8" fill="#f5f5f5" stroke="#f0f0f0" stroke-width="1.6"/><text x="1710.95" y="712.5" font-size="13" fill="#f4f4f4" text-anchor="middle" font-weight="normal" >100</text><text transform="translate(467,632) rotate(-90)" font-size="13" fill="#f0f0f0" text-anchor="middle" textLength="34" lengthAdjust="spacingAndGlyphs">Actual</text><text transform="translate(467,679) rotate(-90)" font-size="13" fill="#f0f0f0" text-anchor="middle" textLength="35" lengthAdjust="spacingAndGlyphs">Target</text><rect x="200" y="728" width="1712" height="7" fill="#2f2f2f" /><rect x="200" y="88" width="1.2" height="962" fill="#262626" /><text x="215.3" y="767.7" font-size="29" fill="#f2f2f2" text-anchor="start" font-weight="normal" textLength="225.7" lengthAdjust="spacingAndGlyphs" >Current Reading</text><text x="215.3" y="811" font-size="25" fill="#f2f2f2" text-anchor="start" font-weight="normal" textLength="91" lengthAdjust="spacingAndGlyphs" >x: 0,325</text><text x="215.3" y="851.6" font-size="25" fill="#f2f2f2" text-anchor="start" font-weight="normal" textLength="106.3" lengthAdjust="spacingAndGlyphs" >y: 0,3378</text><text x="215.3" y="894.3" font-size="25" fill="#f2f2f2" text-anchor="start" font-weight="normal" textLength="128.2" lengthAdjust="spacingAndGlyphs" >fL: 135,478</text><text x="215.3" y="935.9" font-size="25" fill="#f2f2f2" text-anchor="start" font-weight="normal" textLength="177.5" lengthAdjust="spacingAndGlyphs" >cd/m²: 464,183</text><rect x="537.6" y="734.5" width="301" height="222" fill="#dcdcdc" /><rect x="545" y="742.4" width="286.8" height="208.9" fill="#333333" /><clipPath id="cieclip"><rect x="583.2" y="744.9" width="245" height="177.1"/></clipPath><filter id="blur3"><feGaussianBlur stdDeviation="3"/></filter><g clip-path="url(#cieclip)"><g filter="url(#blur3)"><rect x="576" y="738" width="8" height="8" fill="#68ffc7"/><rect x="583" y="738" width="8" height="8" fill="#6effc7"/><rect x="590" y="738" width="8" height="8" fill="#74ffc7"/><rect x="597" y="738" width="8" height="8" fill="#79ffc7"/><rect x="604" y="738" width="8" height="8" fill="#7fffc7"/><rect x="611" y="738" width="8" height="8" fill="#84ffc6"/><rect x="618" y="738" width="8" height="8" fill="#8affc6"/><rect x="625" y="738" width="8" height="8" fill="#8fffc6"/><rect x="632" y="738" width="8" height="8" fill="#95ffc6"/><rect x="639" y="738" width="8" height="8" fill="#9affc6"/><rect x="646" y="738" width="8" height="8" fill="#9fffc5"/><rect x="653" y="738" width="8" height="8" fill="#a5ffc5"/><rect x="660" y="738" width="8" height="8" fill="#aaffc5"/><rect x="667" y="738" width="8" height="8" fill="#afffc5"/><rect x="674" y="738" width="8" height="8" fill="#b4ffc4"/><rect x="681" y="738" width="8" height="8" fill="#b9ffc4"/><rect x="688" y="738" width="8" height="8" fill="#bfffc4"/><rect x="695" y="738" width="8" height="8" fill="#c4ffc4"/><rect x="702" y="738" width="8" height="8" fill="#c9ffc4"/><rect x="709" y="738" width="8" height="8" fill="#ceffc3"/><rect x="716" y="738" width="8" height="8" fill="#d3ffc3"/><rect x="723" y="738" width="8" height="8" fill="#d8ffc3"/><rect x="730" y="738" width="8" height="8" fill="#ddffc3"/><rect x="737" y="738" width="8" height="8" fill="#e2ffc2"/><rect x="744" y="738" width="8" height="8" fill="#e7ffc2"/><rect x="751" y="738" width="8" height="8" fill="#ecffc2"/><rect x="758" y="738" width="8" height="8" fill="#f0ffc2"/><rect x="765" y="738" width="8" height="8" fill="#f5ffc1"/><rect x="772" y="738" width="8" height="8" fill="#faffc1"/><rect x="779" y="738" width="8" height="8" fill="#ffffc1"/><rect x="786" y="738" width="8" height="8" fill="#fffabc"/><rect x="793" y="738" width="8" height="8" fill="#fff5b8"/><rect x="800" y="738" width="8" height="8" fill="#fff1b3"/><rect x="807" y="738" width="8" height="8" fill="#ffecaf"/><rect x="814" y="738" width="8" height="8" fill="#ffe8ab"/><rect x="821" y="738" width="8" height="8" fill="#ffe3a7"/><rect x="828" y="738" width="8" height="8" fill="#ffdfa2"/><rect x="835" y="738" width="8" height="8" fill="#ffdb9e"/><rect x="842" y="738" width="8" height="8" fill="#ffd79a"/><rect x="576" y="745" width="8" height="8" fill="#6cffcb"/><rect x="583" y="745" width="8" height="8" fill="#72ffcb"/><rect x="590" y="745" width="8" height="8" fill="#78ffcb"/><rect x="597" y="745" width="8" height="8" fill="#7dffcb"/><rect x="604" y="745" width="8" height="8" fill="#83ffcb"/><rect x="611" y="745" width="8" height="8" fill="#88ffcb"/><rect x="618" y="745" width="8" height="8" fill="#8effca"/><rect x="625" y="745" width="8" height="8" fill="#93ffca"/><rect x="632" y="745" width="8" height="8" fill="#99ffca"/><rect x="639" y="745" width="8" height="8" fill="#9effca"/><rect x="646" y="745" width="8" height="8" fill="#a3ffca"/><rect x="653" y="745" width="8" height="8" fill="#a9ffc9"/><rect x="660" y="745" width="8" height="8" fill="#aeffc9"/><rect x="667" y="745" width="8" height="8" fill="#b3ffc9"/><rect x="674" y="745" width="8" height="8" fill="#b8ffc9"/><rect x="681" y="745" width="8" height="8" fill="#bdffc8"/><rect x="688" y="745" width="8" height="8" fill="#c2ffc8"/><rect x="695" y="745" width="8" height="8" fill="#c8ffc8"/><rect x="702" y="745" width="8" height="8" fill="#cdffc8"/><rect x="709" y="745" width="8" height="8" fill="#d2ffc8"/><rect x="716" y="745" width="8" height="8" fill="#d7ffc7"/><rect x="723" y="745" width="8" height="8" fill="#dcffc7"/><rect x="730" y="745" width="8" height="8" fill="#e1ffc7"/><rect x="737" y="745" width="8" height="8" fill="#e6ffc7"/><rect x="744" y="745" width="8" height="8" fill="#ebffc6"/><rect x="751" y="745" width="8" height="8" fill="#f0ffc6"/><rect x="758" y="745" width="8" height="8" fill="#f5ffc6"/><rect x="765" y="745" width="8" height="8" fill="#f9ffc6"/><rect x="772" y="745" width="8" height="8" fill="#feffc6"/><rect x="779" y="745" width="8" height="8" fill="#fffbc2"/><rect x="786" y="745" width="8" height="8" fill="#fff6bd"/><rect x="793" y="745" width="8" height="8" fill="#fff1b9"/><rect x="800" y="745" width="8" height="8" fill="#ffedb4"/><rect x="807" y="745" width="8" height="8" fill="#ffe8b0"/><rect x="814" y="745" width="8" height="8" fill="#ffe4ac"/><rect x="821" y="745" width="8" height="8" fill="#ffe0a7"/><rect x="828" y="745" width="8" height="8" fill="#ffdba3"/><rect x="835" y="745" width="8" height="8" fill="#ffd79f"/><rect x="842" y="745" width="8" height="8" fill="#ffd39b"/><rect x="576" y="752" width="8" height="8" fill="#70ffcf"/><rect x="583" y="752" width="8" height="8" fill="#76ffcf"/><rect x="590" y="752" width="8" height="8" fill="#7bffcf"/><rect x="597" y="752" width="8" height="8" fill="#81ffcf"/><rect x="604" y="752" width="8" height="8" fill="#87ffcf"/><rect x="611" y="752" width="8" height="8" fill="#8cffcf"/><rect x="618" y="752" width="8" height="8" fill="#92ffce"/><rect x="625" y="752" width="8" height="8" fill="#97ffce"/><rect x="632" y="752" width="8" height="8" fill="#9cffce"/><rect x="639" y="752" width="8" height="8" fill="#a2ffce"/><rect x="646" y="752" width="8" height="8" fill="#a7ffce"/><rect x="653" y="752" width="8" height="8" fill="#acffcd"/><rect x="660" y="752" width="8" height="8" fill="#b2ffcd"/><rect x="667" y="752" width="8" height="8" fill="#b7ffcd"/><rect x="674" y="752" width="8" height="8" fill="#bcffcd"/><rect x="681" y="752" width="8" height="8" fill="#c1ffcd"/><rect x="688" y="752" width="8" height="8" fill="#c6ffcd"/><rect x="695" y="752" width="8" height="8" fill="#ccffcc"/><rect x="702" y="752" width="8" height="8" fill="#d1ffcc"/><rect x="709" y="752" width="8" height="8" fill="#d6ffcc"/><rect x="716" y="752" width="8" height="8" fill="#dbffcc"/><rect x="723" y="752" width="8" height="8" fill="#e0ffcc"/><rect x="730" y="752" width="8" height="8" fill="#e5ffcb"/><rect x="737" y="752" width="8" height="8" fill="#eaffcb"/><rect x="744" y="752" width="8" height="8" fill="#efffcb"/><rect x="751" y="752" width="8" height="8" fill="#f4ffcb"/><rect x="758" y="752" width="8" height="8" fill="#f9ffca"/><rect x="765" y="752" width="8" height="8" fill="#feffca"/><rect x="772" y="752" width="8" height="8" fill="#fffcc7"/><rect x="779" y="752" width="8" height="8" fill="#fff7c2"/><rect x="786" y="752" width="8" height="8" fill="#fff2be"/><rect x="793" y="752" width="8" height="8" fill="#ffedb9"/><rect x="800" y="752" width="8" height="8" fill="#ffe9b5"/><rect x="807" y="752" width="8" height="8" fill="#ffe4b1"/><rect x="814" y="752" width="8" height="8" fill="#ffe0ac"/><rect x="821" y="752" width="8" height="8" fill="#ffdca8"/><rect x="828" y="752" width="8" height="8" fill="#ffd7a4"/><rect x="835" y="752" width="8" height="8" fill="#ffd3a0"/><rect x="842" y="752" width="8" height="8" fill="#ffcf9c"/><rect x="576" y="759" width="8" height="8" fill="#74ffd4"/><rect x="583" y="759" width="8" height="8" fill="#79ffd3"/><rect x="590" y="759" width="8" height="8" fill="#7fffd3"/><rect x="597" y="759" width="8" height="8" fill="#85ffd3"/><rect x="604" y="759" width="8" height="8" fill="#8affd3"/><rect x="611" y="759" width="8" height="8" fill="#90ffd3"/><rect x="618" y="759" width="8" height="8" fill="#95ffd3"/><rect x="625" y="759" width="8" height="8" fill="#9bffd2"/><rect x="632" y="759" width="8" height="8" fill="#a0ffd2"/><rect x="639" y="759" width="8" height="8" fill="#a6ffd2"/><rect x="646" y="759" width="8" height="8" fill="#abffd2"/><rect x="653" y="759" width="8" height="8" fill="#b0ffd2"/><rect x="660" y="759" width="8" height="8" fill="#b6ffd2"/><rect x="667" y="759" width="8" height="8" fill="#bbffd1"/><rect x="674" y="759" width="8" height="8" fill="#c0ffd1"/><rect x="681" y="759" width="8" height="8" fill="#c5ffd1"/><rect x="688" y="759" width="8" height="8" fill="#caffd1"/><rect x="695" y="759" width="8" height="8" fill="#cfffd1"/><rect x="702" y="759" width="8" height="8" fill="#d5ffd0"/><rect x="709" y="759" width="8" height="8" fill="#daffd0"/><rect x="716" y="759" width="8" height="8" fill="#dfffd0"/><rect x="723" y="759" width="8" height="8" fill="#e4ffd0"/><rect x="730" y="759" width="8" height="8" fill="#e9ffd0"/><rect x="737" y="759" width="8" height="8" fill="#eeffd0"/><rect x="744" y="759" width="8" height="8" fill="#f3ffcf"/><rect x="751" y="759" width="8" height="8" fill="#f8ffcf"/><rect x="758" y="759" width="8" height="8" fill="#fdffcf"/><rect x="765" y="759" width="8" height="8" fill="#fffccc"/><rect x="772" y="759" width="8" height="8" fill="#fff7c8"/><rect x="779" y="759" width="8" height="8" fill="#fff3c3"/><rect x="786" y="759" width="8" height="8" fill="#ffeebf"/><rect x="793" y="759" width="8" height="8" fill="#ffe9ba"/><rect x="800" y="759" width="8" height="8" fill="#ffe5b6"/><rect x="807" y="759" width="8" height="8" fill="#ffe1b1"/><rect x="814" y="759" width="8" height="8" fill="#ffdcad"/><rect x="821" y="759" width="8" height="8" fill="#ffd8a9"/><rect x="828" y="759" width="8" height="8" fill="#ffd4a5"/><rect x="835" y="759" width="8" height="8" fill="#ffd0a1"/><rect x="842" y="759" width="8" height="8" fill="#ffcb9d"/><rect x="576" y="766" width="8" height="8" fill="#78ffd8"/><rect x="583" y="766" width="8" height="8" fill="#7dffd7"/><rect x="590" y="766" width="8" height="8" fill="#83ffd7"/><rect x="597" y="766" width="8" height="8" fill="#89ffd7"/><rect x="604" y="766" width="8" height="8" fill="#8effd7"/><rect x="611" y="766" width="8" height="8" fill="#94ffd7"/><rect x="618" y="766" width="8" height="8" fill="#99ffd7"/><rect x="625" y="766" width="8" height="8" fill="#9fffd7"/><rect x="632" y="766" width="8" height="8" fill="#a4ffd6"/><rect x="639" y="766" width="8" height="8" fill="#aaffd6"/><rect x="646" y="766" width="8" height="8" fill="#afffd6"/><rect x="653" y="766" width="8" height="8" fill="#b4ffd6"/><rect x="660" y="766" width="8" height="8" fill="#b9ffd6"/><rect x="667" y="766" width="8" height="8" fill="#bfffd6"/><rect x="674" y="766" width="8" height="8" fill="#c4ffd5"/><rect x="681" y="766" width="8" height="8" fill="#c9ffd5"/><rect x="688" y="766" width="8" height="8" fill="#ceffd5"/><rect x="695" y="766" width="8" height="8" fill="#d3ffd5"/><rect x="702" y="766" width="8" height="8" fill="#d9ffd5"/><rect x="709" y="766" width="8" height="8" fill="#deffd5"/><rect x="716" y="766" width="8" height="8" fill="#e3ffd4"/><rect x="723" y="766" width="8" height="8" fill="#e8ffd4"/><rect x="730" y="766" width="8" height="8" fill="#edffd4"/><rect x="737" y="766" width="8" height="8" fill="#f2ffd4"/><rect x="744" y="766" width="8" height="8" fill="#f7ffd4"/><rect x="751" y="766" width="8" height="8" fill="#fcffd4"/><rect x="758" y="766" width="8" height="8" fill="#fffdd2"/><rect x="765" y="766" width="8" height="8" fill="#fff8cd"/><rect x="772" y="766" width="8" height="8" fill="#fff3c8"/><rect x="779" y="766" width="8" height="8" fill="#ffefc4"/><rect x="786" y="766" width="8" height="8" fill="#ffeabf"/><rect x="793" y="766" width="8" height="8" fill="#ffe5bb"/><rect x="800" y="766" width="8" height="8" fill="#ffe1b7"/><rect x="807" y="766" width="8" height="8" fill="#ffddb2"/><rect x="814" y="766" width="8" height="8" fill="#ffd8ae"/><rect x="821" y="766" width="8" height="8" fill="#ffd4aa"/><rect x="828" y="766" width="8" height="8" fill="#ffd0a6"/><rect x="835" y="766" width="8" height="8" fill="#ffcca2"/><rect x="842" y="766" width="8" height="8" fill="#ffc89e"/><rect x="576" y="773" width="8" height="8" fill="#7bffdc"/><rect x="583" y="773" width="8" height="8" fill="#81ffdc"/><rect x="590" y="773" width="8" height="8" fill="#87ffdb"/><rect x="597" y="773" width="8" height="8" fill="#8cffdb"/><rect x="604" y="773" width="8" height="8" fill="#92ffdb"/><rect x="611" y="773" width="8" height="8" fill="#98ffdb"/><rect x="618" y="773" width="8" height="8" fill="#9dffdb"/><rect x="625" y="773" width="8" height="8" fill="#a3ffdb"/><rect x="632" y="773" width="8" height="8" fill="#a8ffdb"/><rect x="639" y="773" width="8" height="8" fill="#adffdb"/><rect x="646" y="773" width="8" height="8" fill="#b3ffda"/><rect x="653" y="773" width="8" height="8" fill="#b8ffda"/><rect x="660" y="773" width="8" height="8" fill="#bdffda"/><rect x="667" y="773" width="8" height="8" fill="#c3ffda"/><rect x="674" y="773" width="8" height="8" fill="#c8ffda"/><rect x="681" y="773" width="8" height="8" fill="#cdffda"/><rect x="688" y="773" width="8" height="8" fill="#d2ffda"/><rect x="695" y="773" width="8" height="8" fill="#d8ffd9"/><rect x="702" y="773" width="8" height="8" fill="#ddffd9"/><rect x="709" y="773" width="8" height="8" fill="#e2ffd9"/><rect x="716" y="773" width="8" height="8" fill="#e7ffd9"/><rect x="723" y="773" width="8" height="8" fill="#ecffd9"/><rect x="730" y="773" width="8" height="8" fill="#f1ffd9"/><rect x="737" y="773" width="8" height="8" fill="#f6ffd8"/><rect x="744" y="773" width="8" height="8" fill="#fbffd8"/><rect x="751" y="773" width="8" height="8" fill="#fffed7"/><rect x="758" y="773" width="8" height="8" fill="#fff9d2"/><rect x="765" y="773" width="8" height="8" fill="#fff4ce"/><rect x="772" y="773" width="8" height="8" fill="#ffefc9"/><rect x="779" y="773" width="8" height="8" fill="#ffebc4"/><rect x="786" y="773" width="8" height="8" fill="#ffe6c0"/><rect x="793" y="773" width="8" height="8" fill="#ffe1bc"/><rect x="800" y="773" width="8" height="8" fill="#ffddb7"/><rect x="807" y="773" width="8" height="8" fill="#ffd9b3"/><rect x="814" y="773" width="8" height="8" fill="#ffd4af"/><rect x="821" y="773" width="8" height="8" fill="#ffd0ab"/><rect x="828" y="773" width="8" height="8" fill="#ffcca7"/><rect x="835" y="773" width="8" height="8" fill="#ffc8a3"/><rect x="842" y="773" width="8" height="8" fill="#ffc49f"/><rect x="576" y="780" width="8" height="8" fill="#7fffe0"/><rect x="583" y="780" width="8" height="8" fill="#85ffe0"/><rect x="590" y="780" width="8" height="8" fill="#8bffe0"/><rect x="597" y="780" width="8" height="8" fill="#90ffe0"/><rect x="604" y="780" width="8" height="8" fill="#96ffdf"/><rect x="611" y="780" width="8" height="8" fill="#9cffdf"/><rect x="618" y="780" width="8" height="8" fill="#a1ffdf"/><rect x="625" y="780" width="8" height="8" fill="#a7ffdf"/><rect x="632" y="780" width="8" height="8" fill="#acffdf"/><rect x="639" y="780" width="8" height="8" fill="#b1ffdf"/><rect x="646" y="780" width="8" height="8" fill="#b7ffdf"/><rect x="653" y="780" width="8" height="8" fill="#bcffdf"/><rect x="660" y="780" width="8" height="8" fill="#c1ffde"/><rect x="667" y="780" width="8" height="8" fill="#c7ffde"/><rect x="674" y="780" width="8" height="8" fill="#ccffde"/><rect x="681" y="780" width="8" height="8" fill="#d1ffde"/><rect x="688" y="780" width="8" height="8" fill="#d6ffde"/><rect x="695" y="780" width="8" height="8" fill="#dcffde"/><rect x="702" y="780" width="8" height="8" fill="#e1ffde"/><rect x="709" y="780" width="8" height="8" fill="#e6ffde"/><rect x="716" y="780" width="8" height="8" fill="#ebffdd"/><rect x="723" y="780" width="8" height="8" fill="#f0ffdd"/><rect x="730" y="780" width="8" height="8" fill="#f5ffdd"/><rect x="737" y="780" width="8" height="8" fill="#faffdd"/><rect x="744" y="780" width="8" height="8" fill="#ffffdd"/><rect x="751" y="780" width="8" height="8" fill="#fffad8"/><rect x="758" y="780" width="8" height="8" fill="#fff5d3"/><rect x="765" y="780" width="8" height="8" fill="#fff0ce"/><rect x="772" y="780" width="8" height="8" fill="#ffebca"/><rect x="779" y="780" width="8" height="8" fill="#ffe7c5"/><rect x="786" y="780" width="8" height="8" fill="#ffe2c1"/><rect x="793" y="780" width="8" height="8" fill="#ffdebc"/><rect x="800" y="780" width="8" height="8" fill="#ffd9b8"/><rect x="807" y="780" width="8" height="8" fill="#ffd5b4"/><rect x="814" y="780" width="8" height="8" fill="#ffd1b0"/><rect x="821" y="780" width="8" height="8" fill="#ffccac"/><rect x="828" y="780" width="8" height="8" fill="#ffc8a8"/><rect x="835" y="780" width="8" height="8" fill="#ffc4a4"/><rect x="842" y="780" width="8" height="8" fill="#ffc0a0"/><rect x="576" y="787" width="8" height="8" fill="#83ffe4"/><rect x="583" y="787" width="8" height="8" fill="#89ffe4"/><rect x="590" y="787" width="8" height="8" fill="#8fffe4"/><rect x="597" y="787" width="8" height="8" fill="#94ffe4"/><rect x="604" y="787" width="8" height="8" fill="#9affe4"/><rect x="611" y="787" width="8" height="8" fill="#a0ffe4"/><rect x="618" y="787" width="8" height="8" fill="#a5ffe4"/><rect x="625" y="787" width="8" height="8" fill="#abffe3"/><rect x="632" y="787" width="8" height="8" fill="#b0ffe3"/><rect x="639" y="787" width="8" height="8" fill="#b5ffe3"/><rect x="646" y="787" width="8" height="8" fill="#bbffe3"/><rect x="653" y="787" width="8" height="8" fill="#c0ffe3"/><rect x="660" y="787" width="8" height="8" fill="#c6ffe3"/><rect x="667" y="787" width="8" height="8" fill="#cbffe3"/><rect x="674" y="787" width="8" height="8" fill="#d0ffe3"/><rect x="681" y="787" width="8" height="8" fill="#d5ffe3"/><rect x="688" y="787" width="8" height="8" fill="#dbffe2"/><rect x="695" y="787" width="8" height="8" fill="#e0ffe2"/><rect x="702" y="787" width="8" height="8" fill="#e5ffe2"/><rect x="709" y="787" width="8" height="8" fill="#eaffe2"/><rect x="716" y="787" width="8" height="8" fill="#efffe2"/><rect x="723" y="787" width="8" height="8" fill="#f4ffe2"/><rect x="730" y="787" width="8" height="8" fill="#faffe2"/><rect x="737" y="787" width="8" height="8" fill="#ffffe2"/><rect x="744" y="787" width="8" height="8" fill="#fffadd"/><rect x="751" y="787" width="8" height="8" fill="#fff5d8"/><rect x="758" y="787" width="8" height="8" fill="#fff1d4"/><rect x="765" y="787" width="8" height="8" fill="#ffeccf"/><rect x="772" y="787" width="8" height="8" fill="#ffe7ca"/><rect x="779" y="787" width="8" height="8" fill="#ffe3c6"/><rect x="786" y="787" width="8" height="8" fill="#ffdec1"/><rect x="793" y="787" width="8" height="8" fill="#ffdabd"/><rect x="800" y="787" width="8" height="8" fill="#ffd5b9"/><rect x="807" y="787" width="8" height="8" fill="#ffd1b5"/><rect x="814" y="787" width="8" height="8" fill="#ffcdb0"/><rect x="821" y="787" width="8" height="8" fill="#ffc9ac"/><rect x="828" y="787" width="8" height="8" fill="#ffc4a8"/><rect x="835" y="787" width="8" height="8" fill="#ffc0a5"/><rect x="842" y="787" width="8" height="8" fill="#ffbca1"/><rect x="576" y="794" width="8" height="8" fill="#87ffe8"/><rect x="583" y="794" width="8" height="8" fill="#8dffe8"/><rect x="590" y="794" width="8" height="8" fill="#93ffe8"/><rect x="597" y="794" width="8" height="8" fill="#98ffe8"/><rect x="604" y="794" width="8" height="8" fill="#9effe8"/><rect x="611" y="794" width="8" height="8" fill="#a4ffe8"/><rect x="618" y="794" width="8" height="8" fill="#a9ffe8"/><rect x="625" y="794" width="8" height="8" fill="#afffe8"/><rect x="632" y="794" width="8" height="8" fill="#b4ffe8"/><rect x="639" y="794" width="8" height="8" fill="#b9ffe8"/><rect x="646" y="794" width="8" height="8" fill="#bfffe8"/><rect x="653" y="794" width="8" height="8" fill="#c4ffe7"/><rect x="660" y="794" width="8" height="8" fill="#caffe7"/><rect x="667" y="794" width="8" height="8" fill="#cfffe7"/><rect x="674" y="794" width="8" height="8" fill="#d4ffe7"/><rect x="681" y="794" width="8" height="8" fill="#daffe7"/><rect x="688" y="794" width="8" height="8" fill="#dfffe7"/><rect x="695" y="794" width="8" height="8" fill="#e4ffe7"/><rect x="702" y="794" width="8" height="8" fill="#e9ffe7"/><rect x="709" y="794" width="8" height="8" fill="#eeffe7"/><rect x="716" y="794" width="8" height="8" fill="#f4ffe7"/><rect x="723" y="794" width="8" height="8" fill="#f9ffe7"/><rect x="730" y="794" width="8" height="8" fill="#feffe6"/><rect x="737" y="794" width="8" height="8" fill="#fffbe3"/><rect x="744" y="794" width="8" height="8" fill="#fff6de"/><rect x="751" y="794" width="8" height="8" fill="#fff1d9"/><rect x="758" y="794" width="8" height="8" fill="#ffecd4"/><rect x="765" y="794" width="8" height="8" fill="#ffe8d0"/><rect x="772" y="794" width="8" height="8" fill="#ffe3cb"/><rect x="779" y="794" width="8" height="8" fill="#ffdec7"/><rect x="786" y="794" width="8" height="8" fill="#ffdac2"/><rect x="793" y="794" width="8" height="8" fill="#ffd6be"/><rect x="800" y="794" width="8" height="8" fill="#ffd1ba"/><rect x="807" y="794" width="8" height="8" fill="#ffcdb5"/><rect x="814" y="794" width="8" height="8" fill="#ffc9b1"/><rect x="821" y="794" width="8" height="8" fill="#ffc5ad"/><rect x="828" y="794" width="8" height="8" fill="#ffc1a9"/><rect x="835" y="794" width="8" height="8" fill="#ffbda5"/><rect x="842" y="794" width="8" height="8" fill="#ffb9a1"/><rect x="576" y="801" width="8" height="8" fill="#8bffed"/><rect x="583" y="801" width="8" height="8" fill="#91ffed"/><rect x="590" y="801" width="8" height="8" fill="#97ffec"/><rect x="597" y="801" width="8" height="8" fill="#9cffec"/><rect x="604" y="801" width="8" height="8" fill="#a2ffec"/><rect x="611" y="801" width="8" height="8" fill="#a8ffec"/><rect x="618" y="801" width="8" height="8" fill="#adffec"/><rect x="625" y="801" width="8" height="8" fill="#b3ffec"/><rect x="632" y="801" width="8" height="8" fill="#b8ffec"/><rect x="639" y="801" width="8" height="8" fill="#beffec"/><rect x="646" y="801" width="8" height="8" fill="#c3ffec"/><rect x="653" y="801" width="8" height="8" fill="#c8ffec"/><rect x="660" y="801" width="8" height="8" fill="#ceffec"/><rect x="667" y="801" width="8" height="8" fill="#d3ffec"/><rect x="674" y="801" width="8" height="8" fill="#d8ffec"/><rect x="681" y="801" width="8" height="8" fill="#deffec"/><rect x="688" y="801" width="8" height="8" fill="#e3ffec"/><rect x="695" y="801" width="8" height="8" fill="#e8ffeb"/><rect x="702" y="801" width="8" height="8" fill="#edffeb"/><rect x="709" y="801" width="8" height="8" fill="#f3ffeb"/><rect x="716" y="801" width="8" height="8" fill="#f8ffeb"/><rect x="723" y="801" width="8" height="8" fill="#fdffeb"/><rect x="730" y="801" width="8" height="8" fill="#fffce8"/><rect x="737" y="801" width="8" height="8" fill="#fff7e3"/><rect x="744" y="801" width="8" height="8" fill="#fff2de"/><rect x="751" y="801" width="8" height="8" fill="#ffedd9"/><rect x="758" y="801" width="8" height="8" fill="#ffe8d5"/><rect x="765" y="801" width="8" height="8" fill="#ffe4d0"/><rect x="772" y="801" width="8" height="8" fill="#ffdfcc"/><rect x="779" y="801" width="8" height="8" fill="#ffdac7"/><rect x="786" y="801" width="8" height="8" fill="#ffd6c3"/><rect x="793" y="801" width="8" height="8" fill="#ffd2bf"/><rect x="800" y="801" width="8" height="8" fill="#ffcdba"/><rect x="807" y="801" width="8" height="8" fill="#ffc9b6"/><rect x="814" y="801" width="8" height="8" fill="#ffc5b2"/><rect x="821" y="801" width="8" height="8" fill="#ffc1ae"/><rect x="828" y="801" width="8" height="8" fill="#ffbdaa"/><rect x="835" y="801" width="8" height="8" fill="#ffb9a6"/><rect x="842" y="801" width="8" height="8" fill="#ffb5a2"/><rect x="576" y="808" width="8" height="8" fill="#8ffff1"/><rect x="583" y="808" width="8" height="8" fill="#95fff1"/><rect x="590" y="808" width="8" height="8" fill="#9bfff1"/><rect x="597" y="808" width="8" height="8" fill="#a0fff1"/><rect x="604" y="808" width="8" height="8" fill="#a6fff1"/><rect x="611" y="808" width="8" height="8" fill="#acfff1"/><rect x="618" y="808" width="8" height="8" fill="#b1fff1"/><rect x="625" y="808" width="8" height="8" fill="#b7fff1"/><rect x="632" y="808" width="8" height="8" fill="#bcfff1"/><rect x="639" y="808" width="8" height="8" fill="#c2fff1"/><rect x="646" y="808" width="8" height="8" fill="#c7fff0"/><rect x="653" y="808" width="8" height="8" fill="#cdfff0"/><rect x="660" y="808" width="8" height="8" fill="#d2fff0"/><rect x="667" y="808" width="8" height="8" fill="#d7fff0"/><rect x="674" y="808" width="8" height="8" fill="#ddfff0"/><rect x="681" y="808" width="8" height="8" fill="#e2fff0"/><rect x="688" y="808" width="8" height="8" fill="#e7fff0"/><rect x="695" y="808" width="8" height="8" fill="#edfff0"/><rect x="702" y="808" width="8" height="8" fill="#f2fff0"/><rect x="709" y="808" width="8" height="8" fill="#f7fff0"/><rect x="716" y="808" width="8" height="8" fill="#fcfff0"/><rect x="723" y="808" width="8" height="8" fill="#fffdee"/><rect x="730" y="808" width="8" height="8" fill="#fff8e9"/><rect x="737" y="808" width="8" height="8" fill="#fff3e4"/><rect x="744" y="808" width="8" height="8" fill="#ffeedf"/><rect x="751" y="808" width="8" height="8" fill="#ffe9da"/><rect x="758" y="808" width="8" height="8" fill="#ffe4d5"/><rect x="765" y="808" width="8" height="8" fill="#ffdfd1"/><rect x="772" y="808" width="8" height="8" fill="#ffdbcc"/><rect x="779" y="808" width="8" height="8" fill="#ffd6c8"/><rect x="786" y="808" width="8" height="8" fill="#ffd2c4"/><rect x="793" y="808" width="8" height="8" fill="#ffcebf"/><rect x="800" y="808" width="8" height="8" fill="#ffc9bb"/><rect x="807" y="808" width="8" height="8" fill="#ffc5b7"/><rect x="814" y="808" width="8" height="8" fill="#ffc1b3"/><rect x="821" y="808" width="8" height="8" fill="#ffbdaf"/><rect x="828" y="808" width="8" height="8" fill="#ffb9ab"/><rect x="835" y="808" width="8" height="8" fill="#ffb5a7"/><rect x="842" y="808" width="8" height="8" fill="#ffb1a3"/><rect x="576" y="815" width="8" height="8" fill="#93fff5"/><rect x="583" y="815" width="8" height="8" fill="#99fff5"/><rect x="590" y="815" width="8" height="8" fill="#9ffff5"/><rect x="597" y="815" width="8" height="8" fill="#a4fff5"/><rect x="604" y="815" width="8" height="8" fill="#aafff5"/><rect x="611" y="815" width="8" height="8" fill="#b0fff5"/><rect x="618" y="815" width="8" height="8" fill="#b5fff5"/><rect x="625" y="815" width="8" height="8" fill="#bbfff5"/><rect x="632" y="815" width="8" height="8" fill="#c0fff5"/><rect x="639" y="815" width="8" height="8" fill="#c6fff5"/><rect x="646" y="815" width="8" height="8" fill="#cbfff5"/><rect x="653" y="815" width="8" height="8" fill="#d1fff5"/><rect x="660" y="815" width="8" height="8" fill="#d6fff5"/><rect x="667" y="815" width="8" height="8" fill="#dcfff5"/><rect x="674" y="815" width="8" height="8" fill="#e1fff5"/><rect x="681" y="815" width="8" height="8" fill="#e6fff5"/><rect x="688" y="815" width="8" height="8" fill="#ecfff5"/><rect x="695" y="815" width="8" height="8" fill="#f1fff5"/><rect x="702" y="815" width="8" height="8" fill="#f6fff5"/><rect x="709" y="815" width="8" height="8" fill="#fbfff5"/><rect x="716" y="815" width="8" height="8" fill="#fffdf3"/><rect x="723" y="815" width="8" height="8" fill="#fff8ee"/><rect x="730" y="815" width="8" height="8" fill="#fff3e9"/><rect x="737" y="815" width="8" height="8" fill="#ffeee4"/><rect x="744" y="815" width="8" height="8" fill="#ffe9df"/><rect x="751" y="815" width="8" height="8" fill="#ffe5db"/><rect x="758" y="815" width="8" height="8" fill="#ffe0d6"/><rect x="765" y="815" width="8" height="8" fill="#ffdbd1"/><rect x="772" y="815" width="8" height="8" fill="#ffd7cd"/><rect x="779" y="815" width="8" height="8" fill="#ffd2c9"/><rect x="786" y="815" width="8" height="8" fill="#ffcec4"/><rect x="793" y="815" width="8" height="8" fill="#ffcac0"/><rect x="800" y="815" width="8" height="8" fill="#ffc6bc"/><rect x="807" y="815" width="8" height="8" fill="#ffc1b8"/><rect x="814" y="815" width="8" height="8" fill="#ffbdb4"/><rect x="821" y="815" width="8" height="8" fill="#ffb9b0"/><rect x="828" y="815" width="8" height="8" fill="#ffb5ac"/><rect x="835" y="815" width="8" height="8" fill="#ffb1a8"/><rect x="842" y="815" width="8" height="8" fill="#ffaea4"/><rect x="576" y="822" width="8" height="8" fill="#97fffa"/><rect x="583" y="822" width="8" height="8" fill="#9dfffa"/><rect x="590" y="822" width="8" height="8" fill="#a3fffa"/><rect x="597" y="822" width="8" height="8" fill="#a9fffa"/><rect x="604" y="822" width="8" height="8" fill="#aefffa"/><rect x="611" y="822" width="8" height="8" fill="#b4fffa"/><rect x="618" y="822" width="8" height="8" fill="#b9fffa"/><rect x="625" y="822" width="8" height="8" fill="#bffffa"/><rect x="632" y="822" width="8" height="8" fill="#c5fffa"/><rect x="639" y="822" width="8" height="8" fill="#cafffa"/><rect x="646" y="822" width="8" height="8" fill="#d0fffa"/><rect x="653" y="822" width="8" height="8" fill="#d5fffa"/><rect x="660" y="822" width="8" height="8" fill="#dafffa"/><rect x="667" y="822" width="8" height="8" fill="#e0fffa"/><rect x="674" y="822" width="8" height="8" fill="#e5fffa"/><rect x="681" y="822" width="8" height="8" fill="#ebfffa"/><rect x="688" y="822" width="8" height="8" fill="#f0fffa"/><rect x="695" y="822" width="8" height="8" fill="#f5fffa"/><rect x="702" y="822" width="8" height="8" fill="#fbfff9"/><rect x="709" y="822" width="8" height="8" fill="#fffef9"/><rect x="716" y="822" width="8" height="8" fill="#fff9f4"/><rect x="723" y="822" width="8" height="8" fill="#fff4ee"/><rect x="730" y="822" width="8" height="8" fill="#ffefe9"/><rect x="737" y="822" width="8" height="8" fill="#ffeae5"/><rect x="744" y="822" width="8" height="8" fill="#ffe5e0"/><rect x="751" y="822" width="8" height="8" fill="#ffe0db"/><rect x="758" y="822" width="8" height="8" fill="#ffdcd7"/><rect x="765" y="822" width="8" height="8" fill="#ffd7d2"/><rect x="772" y="822" width="8" height="8" fill="#ffd3ce"/><rect x="779" y="822" width="8" height="8" fill="#ffcec9"/><rect x="786" y="822" width="8" height="8" fill="#ffcac5"/><rect x="793" y="822" width="8" height="8" fill="#ffc6c1"/><rect x="800" y="822" width="8" height="8" fill="#ffc2bc"/><rect x="807" y="822" width="8" height="8" fill="#ffbdb8"/><rect x="814" y="822" width="8" height="8" fill="#ffb9b4"/><rect x="821" y="822" width="8" height="8" fill="#ffb5b0"/><rect x="828" y="822" width="8" height="8" fill="#ffb2ac"/><rect x="835" y="822" width="8" height="8" fill="#ffaea9"/><rect x="842" y="822" width="8" height="8" fill="#ffaaa5"/><rect x="576" y="829" width="8" height="8" fill="#9bfffe"/><rect x="583" y="829" width="8" height="8" fill="#a1fffe"/><rect x="590" y="829" width="8" height="8" fill="#a7fffe"/><rect x="597" y="829" width="8" height="8" fill="#adfffe"/><rect x="604" y="829" width="8" height="8" fill="#b2fffe"/><rect x="611" y="829" width="8" height="8" fill="#b8fffe"/><rect x="618" y="829" width="8" height="8" fill="#befffe"/><rect x="625" y="829" width="8" height="8" fill="#c3fffe"/><rect x="632" y="829" width="8" height="8" fill="#c9fffe"/><rect x="639" y="829" width="8" height="8" fill="#cefffe"/><rect x="646" y="829" width="8" height="8" fill="#d4fffe"/><rect x="653" y="829" width="8" height="8" fill="#d9fffe"/><rect x="660" y="829" width="8" height="8" fill="#dffffe"/><rect x="667" y="829" width="8" height="8" fill="#e4fffe"/><rect x="674" y="829" width="8" height="8" fill="#eafffe"/><rect x="681" y="829" width="8" height="8" fill="#effffe"/><rect x="688" y="829" width="8" height="8" fill="#f4fffe"/><rect x="695" y="829" width="8" height="8" fill="#fafffe"/><rect x="702" y="829" width="8" height="8" fill="#fffffe"/><rect x="709" y="829" width="8" height="8" fill="#fffaf9"/><rect x="716" y="829" width="8" height="8" fill="#fff5f4"/><rect x="723" y="829" width="8" height="8" fill="#fff0ef"/><rect x="730" y="829" width="8" height="8" fill="#ffebea"/><rect x="737" y="829" width="8" height="8" fill="#ffe6e5"/><rect x="744" y="829" width="8" height="8" fill="#ffe1e0"/><rect x="751" y="829" width="8" height="8" fill="#ffdcdc"/><rect x="758" y="829" width="8" height="8" fill="#ffd8d7"/><rect x="765" y="829" width="8" height="8" fill="#ffd3d3"/><rect x="772" y="829" width="8" height="8" fill="#ffcfce"/><rect x="779" y="829" width="8" height="8" fill="#ffcaca"/><rect x="786" y="829" width="8" height="8" fill="#ffc6c6"/><rect x="793" y="829" width="8" height="8" fill="#ffc2c1"/><rect x="800" y="829" width="8" height="8" fill="#ffbebd"/><rect x="807" y="829" width="8" height="8" fill="#ffbab9"/><rect x="814" y="829" width="8" height="8" fill="#ffb6b5"/><rect x="821" y="829" width="8" height="8" fill="#ffb2b1"/><rect x="828" y="829" width="8" height="8" fill="#ffaead"/><rect x="835" y="829" width="8" height="8" fill="#ffaaa9"/><rect x="842" y="829" width="8" height="8" fill="#ffa6a6"/><rect x="576" y="836" width="8" height="8" fill="#9dfbff"/><rect x="583" y="836" width="8" height="8" fill="#a2fbff"/><rect x="590" y="836" width="8" height="8" fill="#a8fbff"/><rect x="597" y="836" width="8" height="8" fill="#aefbff"/><rect x="604" y="836" width="8" height="8" fill="#b3fbff"/><rect x="611" y="836" width="8" height="8" fill="#b9fbff"/><rect x="618" y="836" width="8" height="8" fill="#bffbff"/><rect x="625" y="836" width="8" height="8" fill="#c4fbff"/><rect x="632" y="836" width="8" height="8" fill="#cafbff"/><rect x="639" y="836" width="8" height="8" fill="#cffbff"/><rect x="646" y="836" width="8" height="8" fill="#d5fbff"/><rect x="653" y="836" width="8" height="8" fill="#dafbff"/><rect x="660" y="836" width="8" height="8" fill="#dffbff"/><rect x="667" y="836" width="8" height="8" fill="#e5fbff"/><rect x="674" y="836" width="8" height="8" fill="#eafbff"/><rect x="681" y="836" width="8" height="8" fill="#effbff"/><rect x="688" y="836" width="8" height="8" fill="#f5fbff"/><rect x="695" y="836" width="8" height="8" fill="#fafbff"/><rect x="702" y="836" width="8" height="8" fill="#fffbff"/><rect x="709" y="836" width="8" height="8" fill="#fff5f9"/><rect x="716" y="836" width="8" height="8" fill="#fff0f4"/><rect x="723" y="836" width="8" height="8" fill="#ffebef"/><rect x="730" y="836" width="8" height="8" fill="#ffe6ea"/><rect x="737" y="836" width="8" height="8" fill="#ffe2e6"/><rect x="744" y="836" width="8" height="8" fill="#ffdde1"/><rect x="751" y="836" width="8" height="8" fill="#ffd8dc"/><rect x="758" y="836" width="8" height="8" fill="#ffd4d8"/><rect x="765" y="836" width="8" height="8" fill="#ffcfd3"/><rect x="772" y="836" width="8" height="8" fill="#ffcbcf"/><rect x="779" y="836" width="8" height="8" fill="#ffc6ca"/><rect x="786" y="836" width="8" height="8" fill="#ffc2c6"/><rect x="793" y="836" width="8" height="8" fill="#ffbec2"/><rect x="800" y="836" width="8" height="8" fill="#ffbabe"/><rect x="807" y="836" width="8" height="8" fill="#ffb6ba"/><rect x="814" y="836" width="8" height="8" fill="#ffb2b6"/><rect x="821" y="836" width="8" height="8" fill="#ffaeb2"/><rect x="828" y="836" width="8" height="8" fill="#ffaaae"/><rect x="835" y="836" width="8" height="8" fill="#ffa6aa"/><rect x="842" y="836" width="8" height="8" fill="#ffa2a6"/><rect x="576" y="843" width="8" height="8" fill="#9df7ff"/><rect x="583" y="843" width="8" height="8" fill="#a3f7ff"/><rect x="590" y="843" width="8" height="8" fill="#a8f7ff"/><rect x="597" y="843" width="8" height="8" fill="#aef7ff"/><rect x="604" y="843" width="8" height="8" fill="#b4f7ff"/><rect x="611" y="843" width="8" height="8" fill="#b9f7ff"/><rect x="618" y="843" width="8" height="8" fill="#bff7ff"/><rect x="625" y="843" width="8" height="8" fill="#c4f7ff"/><rect x="632" y="843" width="8" height="8" fill="#caf7ff"/><rect x="639" y="843" width="8" height="8" fill="#cff6ff"/><rect x="646" y="843" width="8" height="8" fill="#d4f6ff"/><rect x="653" y="843" width="8" height="8" fill="#daf6ff"/><rect x="660" y="843" width="8" height="8" fill="#dff6ff"/><rect x="667" y="843" width="8" height="8" fill="#e5f6ff"/><rect x="674" y="843" width="8" height="8" fill="#eaf6ff"/><rect x="681" y="843" width="8" height="8" fill="#eff6ff"/><rect x="688" y="843" width="8" height="8" fill="#f4f6ff"/><rect x="695" y="843" width="8" height="8" fill="#faf6ff"/><rect x="702" y="843" width="8" height="8" fill="#fff6ff"/><rect x="709" y="843" width="8" height="8" fill="#fff1fa"/><rect x="716" y="843" width="8" height="8" fill="#ffecf5"/><rect x="723" y="843" width="8" height="8" fill="#ffe7f0"/><rect x="730" y="843" width="8" height="8" fill="#ffe2eb"/><rect x="737" y="843" width="8" height="8" fill="#ffdde6"/><rect x="744" y="843" width="8" height="8" fill="#ffd9e1"/><rect x="751" y="843" width="8" height="8" fill="#ffd4dd"/><rect x="758" y="843" width="8" height="8" fill="#ffcfd8"/><rect x="765" y="843" width="8" height="8" fill="#ffcbd4"/><rect x="772" y="843" width="8" height="8" fill="#ffc7cf"/><rect x="779" y="843" width="8" height="8" fill="#ffc2cb"/><rect x="786" y="843" width="8" height="8" fill="#ffbec7"/><rect x="793" y="843" width="8" height="8" fill="#ffbac3"/><rect x="800" y="843" width="8" height="8" fill="#ffb6bf"/><rect x="807" y="843" width="8" height="8" fill="#ffb2ba"/><rect x="814" y="843" width="8" height="8" fill="#ffaeb7"/><rect x="821" y="843" width="8" height="8" fill="#ffaab3"/><rect x="828" y="843" width="8" height="8" fill="#ffa6af"/><rect x="835" y="843" width="8" height="8" fill="#ffa2ab"/><rect x="842" y="843" width="8" height="8" fill="#ff9fa7"/><rect x="576" y="850" width="8" height="8" fill="#9df2ff"/><rect x="583" y="850" width="8" height="8" fill="#a3f2ff"/><rect x="590" y="850" width="8" height="8" fill="#a9f2ff"/><rect x="597" y="850" width="8" height="8" fill="#aef2ff"/><rect x="604" y="850" width="8" height="8" fill="#b4f2ff"/><rect x="611" y="850" width="8" height="8" fill="#b9f2ff"/><rect x="618" y="850" width="8" height="8" fill="#bff2ff"/><rect x="625" y="850" width="8" height="8" fill="#c4f2ff"/><rect x="632" y="850" width="8" height="8" fill="#caf2ff"/><rect x="639" y="850" width="8" height="8" fill="#cff2ff"/><rect x="646" y="850" width="8" height="8" fill="#d4f2ff"/><rect x="653" y="850" width="8" height="8" fill="#daf2ff"/><rect x="660" y="850" width="8" height="8" fill="#dff2ff"/><rect x="667" y="850" width="8" height="8" fill="#e4f2ff"/><rect x="674" y="850" width="8" height="8" fill="#eaf2ff"/><rect x="681" y="850" width="8" height="8" fill="#eff1ff"/><rect x="688" y="850" width="8" height="8" fill="#f4f1ff"/><rect x="695" y="850" width="8" height="8" fill="#f9f1ff"/><rect x="702" y="850" width="8" height="8" fill="#fff1ff"/><rect x="709" y="850" width="8" height="8" fill="#ffedfa"/><rect x="716" y="850" width="8" height="8" fill="#ffe8f5"/><rect x="723" y="850" width="8" height="8" fill="#ffe3f0"/><rect x="730" y="850" width="8" height="8" fill="#ffdeeb"/><rect x="737" y="850" width="8" height="8" fill="#ffd9e7"/><rect x="744" y="850" width="8" height="8" fill="#ffd4e2"/><rect x="751" y="850" width="8" height="8" fill="#ffd0dd"/><rect x="758" y="850" width="8" height="8" fill="#ffcbd9"/><rect x="765" y="850" width="8" height="8" fill="#ffc7d4"/><rect x="772" y="850" width="8" height="8" fill="#ffc3d0"/><rect x="779" y="850" width="8" height="8" fill="#ffbecc"/><rect x="786" y="850" width="8" height="8" fill="#ffbac7"/><rect x="793" y="850" width="8" height="8" fill="#ffb6c3"/><rect x="800" y="850" width="8" height="8" fill="#ffb2bf"/><rect x="807" y="850" width="8" height="8" fill="#ffaebb"/><rect x="814" y="850" width="8" height="8" fill="#ffaab7"/><rect x="821" y="850" width="8" height="8" fill="#ffa6b3"/><rect x="828" y="850" width="8" height="8" fill="#ffa2af"/><rect x="835" y="850" width="8" height="8" fill="#ff9fac"/><rect x="842" y="850" width="8" height="8" fill="#ff9ba8"/><rect x="576" y="857" width="8" height="8" fill="#9eeeff"/><rect x="583" y="857" width="8" height="8" fill="#a3eeff"/><rect x="590" y="857" width="8" height="8" fill="#a9eeff"/><rect x="597" y="857" width="8" height="8" fill="#aeeeff"/><rect x="604" y="857" width="8" height="8" fill="#b4eeff"/><rect x="611" y="857" width="8" height="8" fill="#b9eeff"/><rect x="618" y="857" width="8" height="8" fill="#bfeeff"/><rect x="625" y="857" width="8" height="8" fill="#c4edff"/><rect x="632" y="857" width="8" height="8" fill="#caedff"/><rect x="639" y="857" width="8" height="8" fill="#cfedff"/><rect x="646" y="857" width="8" height="8" fill="#d4edff"/><rect x="653" y="857" width="8" height="8" fill="#daedff"/><rect x="660" y="857" width="8" height="8" fill="#dfedff"/><rect x="667" y="857" width="8" height="8" fill="#e4edff"/><rect x="674" y="857" width="8" height="8" fill="#eaedff"/><rect x="681" y="857" width="8" height="8" fill="#efedff"/><rect x="688" y="857" width="8" height="8" fill="#f4edff"/><rect x="695" y="857" width="8" height="8" fill="#f9edff"/><rect x="702" y="857" width="8" height="8" fill="#feecff"/><rect x="709" y="857" width="8" height="8" fill="#ffe8fb"/><rect x="716" y="857" width="8" height="8" fill="#ffe3f6"/><rect x="723" y="857" width="8" height="8" fill="#ffdef1"/><rect x="730" y="857" width="8" height="8" fill="#ffdaec"/><rect x="737" y="857" width="8" height="8" fill="#ffd5e7"/><rect x="744" y="857" width="8" height="8" fill="#ffd0e2"/><rect x="751" y="857" width="8" height="8" fill="#ffccde"/><rect x="758" y="857" width="8" height="8" fill="#ffc7d9"/><rect x="765" y="857" width="8" height="8" fill="#ffc3d5"/><rect x="772" y="857" width="8" height="8" fill="#ffbfd1"/><rect x="779" y="857" width="8" height="8" fill="#ffbacc"/><rect x="786" y="857" width="8" height="8" fill="#ffb6c8"/><rect x="793" y="857" width="8" height="8" fill="#ffb2c4"/><rect x="800" y="857" width="8" height="8" fill="#ffaec0"/><rect x="807" y="857" width="8" height="8" fill="#ffaabc"/><rect x="814" y="857" width="8" height="8" fill="#ffa6b8"/><rect x="821" y="857" width="8" height="8" fill="#ffa2b4"/><rect x="828" y="857" width="8" height="8" fill="#ff9fb0"/><rect x="835" y="857" width="8" height="8" fill="#ff9bac"/><rect x="842" y="857" width="8" height="8" fill="#ff97a9"/><rect x="576" y="864" width="8" height="8" fill="#9eeaff"/><rect x="583" y="864" width="8" height="8" fill="#a4e9ff"/><rect x="590" y="864" width="8" height="8" fill="#a9e9ff"/><rect x="597" y="864" width="8" height="8" fill="#afe9ff"/><rect x="604" y="864" width="8" height="8" fill="#b4e9ff"/><rect x="611" y="864" width="8" height="8" fill="#bae9ff"/><rect x="618" y="864" width="8" height="8" fill="#bfe9ff"/><rect x="625" y="864" width="8" height="8" fill="#c4e9ff"/><rect x="632" y="864" width="8" height="8" fill="#cae9ff"/><rect x="639" y="864" width="8" height="8" fill="#cfe9ff"/><rect x="646" y="864" width="8" height="8" fill="#d4e9ff"/><rect x="653" y="864" width="8" height="8" fill="#dae8ff"/><rect x="660" y="864" width="8" height="8" fill="#dfe8ff"/><rect x="667" y="864" width="8" height="8" fill="#e4e8ff"/><rect x="674" y="864" width="8" height="8" fill="#e9e8ff"/><rect x="681" y="864" width="8" height="8" fill="#efe8ff"/><rect x="688" y="864" width="8" height="8" fill="#f4e8ff"/><rect x="695" y="864" width="8" height="8" fill="#f9e8ff"/><rect x="702" y="864" width="8" height="8" fill="#fee8ff"/><rect x="709" y="864" width="8" height="8" fill="#ffe4fb"/><rect x="716" y="864" width="8" height="8" fill="#ffdff6"/><rect x="723" y="864" width="8" height="8" fill="#ffdaf1"/><rect x="730" y="864" width="8" height="8" fill="#ffd5ec"/><rect x="737" y="864" width="8" height="8" fill="#ffd1e8"/><rect x="744" y="864" width="8" height="8" fill="#ffcce3"/><rect x="751" y="864" width="8" height="8" fill="#ffc8de"/><rect x="758" y="864" width="8" height="8" fill="#ffc3da"/><rect x="765" y="864" width="8" height="8" fill="#ffbfd5"/><rect x="772" y="864" width="8" height="8" fill="#ffbbd1"/><rect x="779" y="864" width="8" height="8" fill="#ffb6cd"/><rect x="786" y="864" width="8" height="8" fill="#ffb2c9"/><rect x="793" y="864" width="8" height="8" fill="#ffaec5"/><rect x="800" y="864" width="8" height="8" fill="#ffaac1"/><rect x="807" y="864" width="8" height="8" fill="#ffa6bd"/><rect x="814" y="864" width="8" height="8" fill="#ffa2b9"/><rect x="821" y="864" width="8" height="8" fill="#ff9fb5"/><rect x="828" y="864" width="8" height="8" fill="#ff9bb1"/><rect x="835" y="864" width="8" height="8" fill="#ff97ad"/><rect x="842" y="864" width="8" height="8" fill="#ff93aa"/><rect x="576" y="871" width="8" height="8" fill="#9ee5ff"/><rect x="583" y="871" width="8" height="8" fill="#a4e5ff"/><rect x="590" y="871" width="8" height="8" fill="#a9e5ff"/><rect x="597" y="871" width="8" height="8" fill="#afe5ff"/><rect x="604" y="871" width="8" height="8" fill="#b4e5ff"/><rect x="611" y="871" width="8" height="8" fill="#bae5ff"/><rect x="618" y="871" width="8" height="8" fill="#bfe4ff"/><rect x="625" y="871" width="8" height="8" fill="#c4e4ff"/><rect x="632" y="871" width="8" height="8" fill="#cae4ff"/><rect x="639" y="871" width="8" height="8" fill="#cfe4ff"/><rect x="646" y="871" width="8" height="8" fill="#d4e4ff"/><rect x="653" y="871" width="8" height="8" fill="#dae4ff"/><rect x="660" y="871" width="8" height="8" fill="#dfe4ff"/><rect x="667" y="871" width="8" height="8" fill="#e4e4ff"/><rect x="674" y="871" width="8" height="8" fill="#e9e4ff"/><rect x="681" y="871" width="8" height="8" fill="#eee3ff"/><rect x="688" y="871" width="8" height="8" fill="#f3e3ff"/><rect x="695" y="871" width="8" height="8" fill="#f9e3ff"/><rect x="702" y="871" width="8" height="8" fill="#fee3ff"/><rect x="709" y="871" width="8" height="8" fill="#ffdffb"/><rect x="716" y="871" width="8" height="8" fill="#ffdaf6"/><rect x="723" y="871" width="8" height="8" fill="#ffd6f1"/><rect x="730" y="871" width="8" height="8" fill="#ffd1ed"/><rect x="737" y="871" width="8" height="8" fill="#ffcce8"/><rect x="744" y="871" width="8" height="8" fill="#ffc8e3"/><rect x="751" y="871" width="8" height="8" fill="#ffc3df"/><rect x="758" y="871" width="8" height="8" fill="#ffbfda"/><rect x="765" y="871" width="8" height="8" fill="#ffbbd6"/><rect x="772" y="871" width="8" height="8" fill="#ffb7d2"/><rect x="779" y="871" width="8" height="8" fill="#ffb2cd"/><rect x="786" y="871" width="8" height="8" fill="#ffaec9"/><rect x="793" y="871" width="8" height="8" fill="#ffaac5"/><rect x="800" y="871" width="8" height="8" fill="#ffa6c1"/><rect x="807" y="871" width="8" height="8" fill="#ffa2bd"/><rect x="814" y="871" width="8" height="8" fill="#ff9eb9"/><rect x="821" y="871" width="8" height="8" fill="#ff9bb5"/><rect x="828" y="871" width="8" height="8" fill="#ff97b2"/><rect x="835" y="871" width="8" height="8" fill="#ff93ae"/><rect x="842" y="871" width="8" height="8" fill="#ff90aa"/><rect x="576" y="878" width="8" height="8" fill="#9fe1ff"/><rect x="583" y="878" width="8" height="8" fill="#a4e1ff"/><rect x="590" y="878" width="8" height="8" fill="#aae1ff"/><rect x="597" y="878" width="8" height="8" fill="#afe0ff"/><rect x="604" y="878" width="8" height="8" fill="#b5e0ff"/><rect x="611" y="878" width="8" height="8" fill="#bae0ff"/><rect x="618" y="878" width="8" height="8" fill="#bfe0ff"/><rect x="625" y="878" width="8" height="8" fill="#c5e0ff"/><rect x="632" y="878" width="8" height="8" fill="#cae0ff"/><rect x="639" y="878" width="8" height="8" fill="#cfe0ff"/><rect x="646" y="878" width="8" height="8" fill="#d4dfff"/><rect x="653" y="878" width="8" height="8" fill="#d9dfff"/><rect x="660" y="878" width="8" height="8" fill="#dfdfff"/><rect x="667" y="878" width="8" height="8" fill="#e4dfff"/><rect x="674" y="878" width="8" height="8" fill="#e9dfff"/><rect x="681" y="878" width="8" height="8" fill="#eedfff"/><rect x="688" y="878" width="8" height="8" fill="#f3dfff"/><rect x="695" y="878" width="8" height="8" fill="#f8deff"/><rect x="702" y="878" width="8" height="8" fill="#fddeff"/><rect x="709" y="878" width="8" height="8" fill="#ffdbfc"/><rect x="716" y="878" width="8" height="8" fill="#ffd6f7"/><rect x="723" y="878" width="8" height="8" fill="#ffd1f2"/><rect x="730" y="878" width="8" height="8" fill="#ffcded"/><rect x="737" y="878" width="8" height="8" fill="#ffc8e8"/><rect x="744" y="878" width="8" height="8" fill="#ffc4e4"/><rect x="751" y="878" width="8" height="8" fill="#ffbfdf"/><rect x="758" y="878" width="8" height="8" fill="#ffbbdb"/><rect x="765" y="878" width="8" height="8" fill="#ffb7d7"/><rect x="772" y="878" width="8" height="8" fill="#ffb2d2"/><rect x="779" y="878" width="8" height="8" fill="#ffaece"/><rect x="786" y="878" width="8" height="8" fill="#ffaaca"/><rect x="793" y="878" width="8" height="8" fill="#ffa6c6"/><rect x="800" y="878" width="8" height="8" fill="#ffa2c2"/><rect x="807" y="878" width="8" height="8" fill="#ff9ebe"/><rect x="814" y="878" width="8" height="8" fill="#ff9bba"/><rect x="821" y="878" width="8" height="8" fill="#ff97b6"/><rect x="828" y="878" width="8" height="8" fill="#ff93b2"/><rect x="835" y="878" width="8" height="8" fill="#ff8faf"/><rect x="842" y="878" width="8" height="8" fill="#ff8cab"/><rect x="576" y="885" width="8" height="8" fill="#9fdcff"/><rect x="583" y="885" width="8" height="8" fill="#a5dcff"/><rect x="590" y="885" width="8" height="8" fill="#aadcff"/><rect x="597" y="885" width="8" height="8" fill="#afdcff"/><rect x="604" y="885" width="8" height="8" fill="#b5dcff"/><rect x="611" y="885" width="8" height="8" fill="#badcff"/><rect x="618" y="885" width="8" height="8" fill="#bfdcff"/><rect x="625" y="885" width="8" height="8" fill="#c5dbff"/><rect x="632" y="885" width="8" height="8" fill="#cadbff"/><rect x="639" y="885" width="8" height="8" fill="#cfdbff"/><rect x="646" y="885" width="8" height="8" fill="#d4dbff"/><rect x="653" y="885" width="8" height="8" fill="#d9dbff"/><rect x="660" y="885" width="8" height="8" fill="#dfdbff"/><rect x="667" y="885" width="8" height="8" fill="#e4daff"/><rect x="674" y="885" width="8" height="8" fill="#e9daff"/><rect x="681" y="885" width="8" height="8" fill="#eedaff"/><rect x="688" y="885" width="8" height="8" fill="#f3daff"/><rect x="695" y="885" width="8" height="8" fill="#f8daff"/><rect x="702" y="885" width="8" height="8" fill="#fddaff"/><rect x="709" y="885" width="8" height="8" fill="#ffd7fc"/><rect x="716" y="885" width="8" height="8" fill="#ffd2f7"/><rect x="723" y="885" width="8" height="8" fill="#ffcdf2"/><rect x="730" y="885" width="8" height="8" fill="#ffc8ee"/><rect x="737" y="885" width="8" height="8" fill="#ffc4e9"/><rect x="744" y="885" width="8" height="8" fill="#ffc0e4"/><rect x="751" y="885" width="8" height="8" fill="#ffbbe0"/><rect x="758" y="885" width="8" height="8" fill="#ffb7db"/><rect x="765" y="885" width="8" height="8" fill="#ffb3d7"/><rect x="772" y="885" width="8" height="8" fill="#ffaed3"/><rect x="779" y="885" width="8" height="8" fill="#ffaacf"/><rect x="786" y="885" width="8" height="8" fill="#ffa6cb"/><rect x="793" y="885" width="8" height="8" fill="#ffa2c6"/><rect x="800" y="885" width="8" height="8" fill="#ff9ec2"/><rect x="807" y="885" width="8" height="8" fill="#ff9bbf"/><rect x="814" y="885" width="8" height="8" fill="#ff97bb"/><rect x="821" y="885" width="8" height="8" fill="#ff93b7"/><rect x="828" y="885" width="8" height="8" fill="#ff8fb3"/><rect x="835" y="885" width="8" height="8" fill="#ff8caf"/><rect x="842" y="885" width="8" height="8" fill="#ff88ac"/><rect x="576" y="892" width="8" height="8" fill="#9fd8ff"/><rect x="583" y="892" width="8" height="8" fill="#a5d8ff"/><rect x="590" y="892" width="8" height="8" fill="#aad8ff"/><rect x="597" y="892" width="8" height="8" fill="#b0d8ff"/><rect x="604" y="892" width="8" height="8" fill="#b5d7ff"/><rect x="611" y="892" width="8" height="8" fill="#bad7ff"/><rect x="618" y="892" width="8" height="8" fill="#bfd7ff"/><rect x="625" y="892" width="8" height="8" fill="#c5d7ff"/><rect x="632" y="892" width="8" height="8" fill="#cad7ff"/><rect x="639" y="892" width="8" height="8" fill="#cfd7ff"/><rect x="646" y="892" width="8" height="8" fill="#d4d6ff"/><rect x="653" y="892" width="8" height="8" fill="#d9d6ff"/><rect x="660" y="892" width="8" height="8" fill="#ded6ff"/><rect x="667" y="892" width="8" height="8" fill="#e4d6ff"/><rect x="674" y="892" width="8" height="8" fill="#e9d6ff"/><rect x="681" y="892" width="8" height="8" fill="#eed5ff"/><rect x="688" y="892" width="8" height="8" fill="#f3d5ff"/><rect x="695" y="892" width="8" height="8" fill="#f8d5ff"/><rect x="702" y="892" width="8" height="8" fill="#fdd5ff"/><rect x="709" y="892" width="8" height="8" fill="#ffd2fc"/><rect x="716" y="892" width="8" height="8" fill="#ffcdf7"/><rect x="723" y="892" width="8" height="8" fill="#ffc9f3"/><rect x="730" y="892" width="8" height="8" fill="#ffc4ee"/><rect x="737" y="892" width="8" height="8" fill="#ffc0e9"/><rect x="744" y="892" width="8" height="8" fill="#ffbbe5"/><rect x="751" y="892" width="8" height="8" fill="#ffb7e0"/><rect x="758" y="892" width="8" height="8" fill="#ffb3dc"/><rect x="765" y="892" width="8" height="8" fill="#ffafd8"/><rect x="772" y="892" width="8" height="8" fill="#ffaad3"/><rect x="779" y="892" width="8" height="8" fill="#ffa6cf"/><rect x="786" y="892" width="8" height="8" fill="#ffa2cb"/><rect x="793" y="892" width="8" height="8" fill="#ff9ec7"/><rect x="800" y="892" width="8" height="8" fill="#ff9bc3"/><rect x="807" y="892" width="8" height="8" fill="#ff97bf"/><rect x="814" y="892" width="8" height="8" fill="#ff93bb"/><rect x="821" y="892" width="8" height="8" fill="#ff8fb8"/><rect x="828" y="892" width="8" height="8" fill="#ff8cb4"/><rect x="835" y="892" width="8" height="8" fill="#ff88b0"/><rect x="842" y="892" width="8" height="8" fill="#ff84ac"/><rect x="576" y="899" width="8" height="8" fill="#a0d4ff"/><rect x="583" y="899" width="8" height="8" fill="#a5d4ff"/><rect x="590" y="899" width="8" height="8" fill="#aad3ff"/><rect x="597" y="899" width="8" height="8" fill="#b0d3ff"/><rect x="604" y="899" width="8" height="8" fill="#b5d3ff"/><rect x="611" y="899" width="8" height="8" fill="#bad3ff"/><rect x="618" y="899" width="8" height="8" fill="#c0d3ff"/><rect x="625" y="899" width="8" height="8" fill="#c5d2ff"/><rect x="632" y="899" width="8" height="8" fill="#cad2ff"/><rect x="639" y="899" width="8" height="8" fill="#cfd2ff"/><rect x="646" y="899" width="8" height="8" fill="#d4d2ff"/><rect x="653" y="899" width="8" height="8" fill="#d9d2ff"/><rect x="660" y="899" width="8" height="8" fill="#ded1ff"/><rect x="667" y="899" width="8" height="8" fill="#e3d1ff"/><rect x="674" y="899" width="8" height="8" fill="#e8d1ff"/><rect x="681" y="899" width="8" height="8" fill="#edd1ff"/><rect x="688" y="899" width="8" height="8" fill="#f2d1ff"/><rect x="695" y="899" width="8" height="8" fill="#f7d0ff"/><rect x="702" y="899" width="8" height="8" fill="#fcd0ff"/><rect x="709" y="899" width="8" height="8" fill="#ffcefd"/><rect x="716" y="899" width="8" height="8" fill="#ffc9f8"/><rect x="723" y="899" width="8" height="8" fill="#ffc5f3"/><rect x="730" y="899" width="8" height="8" fill="#ffc0ee"/><rect x="737" y="899" width="8" height="8" fill="#ffbcea"/><rect x="744" y="899" width="8" height="8" fill="#ffb7e5"/><rect x="751" y="899" width="8" height="8" fill="#ffb3e1"/><rect x="758" y="899" width="8" height="8" fill="#ffafdc"/><rect x="765" y="899" width="8" height="8" fill="#ffaad8"/><rect x="772" y="899" width="8" height="8" fill="#ffa6d4"/><rect x="779" y="899" width="8" height="8" fill="#ffa2d0"/><rect x="786" y="899" width="8" height="8" fill="#ff9ecc"/><rect x="793" y="899" width="8" height="8" fill="#ff9ac8"/><rect x="800" y="899" width="8" height="8" fill="#ff97c4"/><rect x="807" y="899" width="8" height="8" fill="#ff93c0"/><rect x="814" y="899" width="8" height="8" fill="#ff8fbc"/><rect x="821" y="899" width="8" height="8" fill="#ff8bb8"/><rect x="828" y="899" width="8" height="8" fill="#ff88b4"/><rect x="835" y="899" width="8" height="8" fill="#ff84b1"/><rect x="842" y="899" width="8" height="8" fill="#ff81ad"/><rect x="576" y="906" width="8" height="8" fill="#a0cfff"/><rect x="583" y="906" width="8" height="8" fill="#a5cfff"/><rect x="590" y="906" width="8" height="8" fill="#abcfff"/><rect x="597" y="906" width="8" height="8" fill="#b0cfff"/><rect x="604" y="906" width="8" height="8" fill="#b5cfff"/><rect x="611" y="906" width="8" height="8" fill="#baceff"/><rect x="618" y="906" width="8" height="8" fill="#c0ceff"/><rect x="625" y="906" width="8" height="8" fill="#c5ceff"/><rect x="632" y="906" width="8" height="8" fill="#caceff"/><rect x="639" y="906" width="8" height="8" fill="#cfceff"/><rect x="646" y="906" width="8" height="8" fill="#d4cdff"/><rect x="653" y="906" width="8" height="8" fill="#d9cdff"/><rect x="660" y="906" width="8" height="8" fill="#decdff"/><rect x="667" y="906" width="8" height="8" fill="#e3cdff"/><rect x="674" y="906" width="8" height="8" fill="#e8ccff"/><rect x="681" y="906" width="8" height="8" fill="#edccff"/><rect x="688" y="906" width="8" height="8" fill="#f2ccff"/><rect x="695" y="906" width="8" height="8" fill="#f7ccff"/><rect x="702" y="906" width="8" height="8" fill="#fcccff"/><rect x="709" y="906" width="8" height="8" fill="#ffc9fd"/><rect x="716" y="906" width="8" height="8" fill="#ffc5f8"/><rect x="723" y="906" width="8" height="8" fill="#ffc0f3"/><rect x="730" y="906" width="8" height="8" fill="#ffbcef"/><rect x="737" y="906" width="8" height="8" fill="#ffb7ea"/><rect x="744" y="906" width="8" height="8" fill="#ffb3e6"/><rect x="751" y="906" width="8" height="8" fill="#ffafe1"/><rect x="758" y="906" width="8" height="8" fill="#ffabdd"/><rect x="765" y="906" width="8" height="8" fill="#ffa6d9"/><rect x="772" y="906" width="8" height="8" fill="#ffa2d5"/><rect x="779" y="906" width="8" height="8" fill="#ff9ed0"/><rect x="786" y="906" width="8" height="8" fill="#ff9acc"/><rect x="793" y="906" width="8" height="8" fill="#ff96c8"/><rect x="800" y="906" width="8" height="8" fill="#ff93c4"/><rect x="807" y="906" width="8" height="8" fill="#ff8fc0"/><rect x="814" y="906" width="8" height="8" fill="#ff8bbd"/><rect x="821" y="906" width="8" height="8" fill="#ff87b9"/><rect x="828" y="906" width="8" height="8" fill="#ff84b5"/><rect x="835" y="906" width="8" height="8" fill="#ff80b2"/><rect x="842" y="906" width="8" height="8" fill="#ff7dae"/><rect x="576" y="913" width="8" height="8" fill="#a0cbff"/><rect x="583" y="913" width="8" height="8" fill="#a6cbff"/><rect x="590" y="913" width="8" height="8" fill="#abcbff"/><rect x="597" y="913" width="8" height="8" fill="#b0caff"/><rect x="604" y="913" width="8" height="8" fill="#b5caff"/><rect x="611" y="913" width="8" height="8" fill="#bbcaff"/><rect x="618" y="913" width="8" height="8" fill="#c0caff"/><rect x="625" y="913" width="8" height="8" fill="#c5caff"/><rect x="632" y="913" width="8" height="8" fill="#cac9ff"/><rect x="639" y="913" width="8" height="8" fill="#cfc9ff"/><rect x="646" y="913" width="8" height="8" fill="#d4c9ff"/><rect x="653" y="913" width="8" height="8" fill="#d9c9ff"/><rect x="660" y="913" width="8" height="8" fill="#dec8ff"/><rect x="667" y="913" width="8" height="8" fill="#e3c8ff"/><rect x="674" y="913" width="8" height="8" fill="#e8c8ff"/><rect x="681" y="913" width="8" height="8" fill="#edc8ff"/><rect x="688" y="913" width="8" height="8" fill="#f2c7ff"/><rect x="695" y="913" width="8" height="8" fill="#f7c7ff"/><rect x="702" y="913" width="8" height="8" fill="#fcc7ff"/><rect x="709" y="913" width="8" height="8" fill="#ffc5fd"/><rect x="716" y="913" width="8" height="8" fill="#ffc1f9"/><rect x="723" y="913" width="8" height="8" fill="#ffbcf4"/><rect x="730" y="913" width="8" height="8" fill="#ffb8ef"/><rect x="737" y="913" width="8" height="8" fill="#ffb3eb"/><rect x="744" y="913" width="8" height="8" fill="#ffafe6"/><rect x="751" y="913" width="8" height="8" fill="#ffabe2"/><rect x="758" y="913" width="8" height="8" fill="#ffa6dd"/><rect x="765" y="913" width="8" height="8" fill="#ffa2d9"/><rect x="772" y="913" width="8" height="8" fill="#ff9ed5"/><rect x="779" y="913" width="8" height="8" fill="#ff9ad1"/><rect x="786" y="913" width="8" height="8" fill="#ff96cd"/><rect x="793" y="913" width="8" height="8" fill="#ff93c9"/><rect x="800" y="913" width="8" height="8" fill="#ff8fc5"/><rect x="807" y="913" width="8" height="8" fill="#ff8bc1"/><rect x="814" y="913" width="8" height="8" fill="#ff87bd"/><rect x="821" y="913" width="8" height="8" fill="#ff84ba"/><rect x="828" y="913" width="8" height="8" fill="#ff80b6"/><rect x="835" y="913" width="8" height="8" fill="#ff7db2"/><rect x="842" y="913" width="8" height="8" fill="#ff79af"/><rect x="576" y="920" width="8" height="8" fill="#a1c7ff"/><rect x="583" y="920" width="8" height="8" fill="#a6c7ff"/><rect x="590" y="920" width="8" height="8" fill="#abc6ff"/><rect x="597" y="920" width="8" height="8" fill="#b0c6ff"/><rect x="604" y="920" width="8" height="8" fill="#b6c6ff"/><rect x="611" y="920" width="8" height="8" fill="#bbc6ff"/><rect x="618" y="920" width="8" height="8" fill="#c0c5ff"/><rect x="625" y="920" width="8" height="8" fill="#c5c5ff"/><rect x="632" y="920" width="8" height="8" fill="#cac5ff"/><rect x="639" y="920" width="8" height="8" fill="#cfc5ff"/><rect x="646" y="920" width="8" height="8" fill="#d4c4ff"/><rect x="653" y="920" width="8" height="8" fill="#d9c4ff"/><rect x="660" y="920" width="8" height="8" fill="#dec4ff"/><rect x="667" y="920" width="8" height="8" fill="#e3c4ff"/><rect x="674" y="920" width="8" height="8" fill="#e8c3ff"/><rect x="681" y="920" width="8" height="8" fill="#edc3ff"/><rect x="688" y="920" width="8" height="8" fill="#f2c3ff"/><rect x="695" y="920" width="8" height="8" fill="#f7c3ff"/><rect x="702" y="920" width="8" height="8" fill="#fbc2ff"/><rect x="709" y="920" width="8" height="8" fill="#ffc1fe"/><rect x="716" y="920" width="8" height="8" fill="#ffbcf9"/><rect x="723" y="920" width="8" height="8" fill="#ffb8f4"/><rect x="730" y="920" width="8" height="8" fill="#ffb3f0"/><rect x="737" y="920" width="8" height="8" fill="#ffafeb"/><rect x="744" y="920" width="8" height="8" fill="#ffabe7"/><rect x="751" y="920" width="8" height="8" fill="#ffa6e2"/><rect x="758" y="920" width="8" height="8" fill="#ffa2de"/><rect x="765" y="920" width="8" height="8" fill="#ff9eda"/><rect x="772" y="920" width="8" height="8" fill="#ff9ad6"/><rect x="779" y="920" width="8" height="8" fill="#ff96d1"/><rect x="786" y="920" width="8" height="8" fill="#ff92cd"/><rect x="793" y="920" width="8" height="8" fill="#ff8fc9"/><rect x="800" y="920" width="8" height="8" fill="#ff8bc6"/><rect x="807" y="920" width="8" height="8" fill="#ff87c2"/><rect x="814" y="920" width="8" height="8" fill="#ff83be"/><rect x="821" y="920" width="8" height="8" fill="#ff80ba"/><rect x="828" y="920" width="8" height="8" fill="#ff7cb7"/><rect x="835" y="920" width="8" height="8" fill="#ff79b3"/><rect x="842" y="920" width="8" height="8" fill="#ff75af"/><rect x="576" y="927" width="8" height="8" fill="#a1c2ff"/><rect x="583" y="927" width="8" height="8" fill="#a6c2ff"/><rect x="590" y="927" width="8" height="8" fill="#abc2ff"/><rect x="597" y="927" width="8" height="8" fill="#b1c2ff"/><rect x="604" y="927" width="8" height="8" fill="#b6c1ff"/><rect x="611" y="927" width="8" height="8" fill="#bbc1ff"/><rect x="618" y="927" width="8" height="8" fill="#c0c1ff"/><rect x="625" y="927" width="8" height="8" fill="#c5c1ff"/><rect x="632" y="927" width="8" height="8" fill="#cac0ff"/><rect x="639" y="927" width="8" height="8" fill="#cfc0ff"/><rect x="646" y="927" width="8" height="8" fill="#d4c0ff"/><rect x="653" y="927" width="8" height="8" fill="#d9c0ff"/><rect x="660" y="927" width="8" height="8" fill="#debfff"/><rect x="667" y="927" width="8" height="8" fill="#e3bfff"/><rect x="674" y="927" width="8" height="8" fill="#e8bfff"/><rect x="681" y="927" width="8" height="8" fill="#edbeff"/><rect x="688" y="927" width="8" height="8" fill="#f2beff"/><rect x="695" y="927" width="8" height="8" fill="#f6beff"/><rect x="702" y="927" width="8" height="8" fill="#fbbeff"/><rect x="709" y="927" width="8" height="8" fill="#ffbcfe"/><rect x="716" y="927" width="8" height="8" fill="#ffb8f9"/><rect x="723" y="927" width="8" height="8" fill="#ffb3f5"/><rect x="730" y="927" width="8" height="8" fill="#ffaff0"/><rect x="737" y="927" width="8" height="8" fill="#ffabeb"/><rect x="744" y="927" width="8" height="8" fill="#ffa6e7"/><rect x="751" y="927" width="8" height="8" fill="#ffa2e3"/><rect x="758" y="927" width="8" height="8" fill="#ff9ede"/><rect x="765" y="927" width="8" height="8" fill="#ff9ada"/><rect x="772" y="927" width="8" height="8" fill="#ff96d6"/><rect x="779" y="927" width="8" height="8" fill="#ff92d2"/><rect x="786" y="927" width="8" height="8" fill="#ff8ece"/><rect x="793" y="927" width="8" height="8" fill="#ff8bca"/><rect x="800" y="927" width="8" height="8" fill="#ff87c6"/><rect x="807" y="927" width="8" height="8" fill="#ff83c2"/><rect x="814" y="927" width="8" height="8" fill="#ff80bf"/><rect x="821" y="927" width="8" height="8" fill="#ff7cbb"/><rect x="828" y="927" width="8" height="8" fill="#ff78b7"/><rect x="835" y="927" width="8" height="8" fill="#ff75b4"/><rect x="842" y="927" width="8" height="8" fill="#ff71b0"/><rect x="576" y="934" width="8" height="8" fill="#a1beff"/><rect x="583" y="934" width="8" height="8" fill="#a7beff"/><rect x="590" y="934" width="8" height="8" fill="#acbeff"/><rect x="597" y="934" width="8" height="8" fill="#b1bdff"/><rect x="604" y="934" width="8" height="8" fill="#b6bdff"/><rect x="611" y="934" width="8" height="8" fill="#bbbdff"/><rect x="618" y="934" width="8" height="8" fill="#c0bdff"/><rect x="625" y="934" width="8" height="8" fill="#c5bcff"/><rect x="632" y="934" width="8" height="8" fill="#cabcff"/><rect x="639" y="934" width="8" height="8" fill="#cfbcff"/><rect x="646" y="934" width="8" height="8" fill="#d4bbff"/><rect x="653" y="934" width="8" height="8" fill="#d9bbff"/><rect x="660" y="934" width="8" height="8" fill="#debbff"/><rect x="667" y="934" width="8" height="8" fill="#e3baff"/><rect x="674" y="934" width="8" height="8" fill="#e8baff"/><rect x="681" y="934" width="8" height="8" fill="#ecbaff"/><rect x="688" y="934" width="8" height="8" fill="#f1baff"/><rect x="695" y="934" width="8" height="8" fill="#f6b9ff"/><rect x="702" y="934" width="8" height="8" fill="#fbb9ff"/><rect x="709" y="934" width="8" height="8" fill="#ffb8fe"/><rect x="716" y="934" width="8" height="8" fill="#ffb4fa"/><rect x="723" y="934" width="8" height="8" fill="#ffaff5"/><rect x="730" y="934" width="8" height="8" fill="#ffabf0"/><rect x="737" y="934" width="8" height="8" fill="#ffa7ec"/><rect x="744" y="934" width="8" height="8" fill="#ffa2e8"/><rect x="751" y="934" width="8" height="8" fill="#ff9ee3"/><rect x="758" y="934" width="8" height="8" fill="#ff9adf"/><rect x="765" y="934" width="8" height="8" fill="#ff96db"/><rect x="772" y="934" width="8" height="8" fill="#ff92d7"/><rect x="779" y="934" width="8" height="8" fill="#ff8ed3"/><rect x="786" y="934" width="8" height="8" fill="#ff8acf"/><rect x="793" y="934" width="8" height="8" fill="#ff87cb"/><rect x="800" y="934" width="8" height="8" fill="#ff83c7"/><rect x="807" y="934" width="8" height="8" fill="#ff7fc3"/><rect x="814" y="934" width="8" height="8" fill="#ff7cbf"/><rect x="821" y="934" width="8" height="8" fill="#ff78bb"/><rect x="828" y="934" width="8" height="8" fill="#ff75b8"/><rect x="835" y="934" width="8" height="8" fill="#ff71b4"/><rect x="842" y="934" width="8" height="8" fill="#ff6eb1"/></g><line x1="613" y1="922.8" x2="830" y2="773.3" stroke="#000" stroke-width="3"/><rect x="699.3" y="827.4" width="12.5" height="12.2" fill="none" stroke="#000" stroke-width="2.2"/><circle cx="731.4" cy="798.4" r="4.6" fill="#111" stroke="#000" stroke-width="1"/><circle cx="738.5" cy="792.2" r="4.6" fill="#2a2a2a" stroke="#000" stroke-width="1"/><circle cx="740.2" cy="794.8" r="4.6" fill="#555" stroke="#000" stroke-width="1"/><circle cx="742" cy="797.2" r="4.6" fill="#777" stroke="#000" stroke-width="1"/><circle cx="744" cy="799.5" r="4.6" fill="#8a8a8a" stroke="#000" stroke-width="1"/><circle cx="746.5" cy="801.5" r="4.6" fill="#a0a0a0" stroke="#000" stroke-width="1"/><circle cx="749" cy="803" r="4.6" fill="#bdbdbd" stroke="#000" stroke-width="1"/><circle cx="752.7" cy="803.8" r="4.6" fill="#d8d8d8" stroke="#000" stroke-width="1"/><circle cx="765.9" cy="801.1" r="4.6" fill="#ffffff" stroke="#000" stroke-width="1"/></g><rect x="583.2" y="744.9" width="245" height="177.1" fill="none" stroke="#222" stroke-width="1"/><line x1="578" y1="759.7" x2="583.2" y2="759.7" stroke="#bbb" stroke-width="1.2" /><text x="577.5" y="765.0" font-size="15" fill="#d8d8d8" text-anchor="end" font-weight="normal" >0,35</text><line x1="578" y1="794.7999999999998" x2="583.2" y2="794.7999999999998" stroke="#bbb" stroke-width="1.2" /><text x="577.5" y="800.0999999999998" font-size="15" fill="#d8d8d8" text-anchor="end" font-weight="normal" >0,34</text><line x1="578" y1="829.8999999999999" x2="583.2" y2="829.8999999999999" stroke="#bbb" stroke-width="1.2" /><text x="577.5" y="835.1999999999998" font-size="15" fill="#d8d8d8" text-anchor="end" font-weight="normal" >0,33</text><line x1="578" y1="865.0" x2="583.2" y2="865.0" stroke="#bbb" stroke-width="1.2" /><text x="577.5" y="870.3" font-size="15" fill="#d8d8d8" text-anchor="end" font-weight="normal" >0,32</text><line x1="578" y1="900.0999999999999" x2="583.2" y2="900.0999999999999" stroke="#bbb" stroke-width="1.2" /><text x="577.5" y="905.3999999999999" font-size="15" fill="#d8d8d8" text-anchor="end" font-weight="normal" >0,31</text><line x1="593.5" y1="922" x2="593.5" y2="928" stroke="#bbb" stroke-width="1.2" /><text x="593.5" y="944.5" font-size="15" fill="#d8d8d8" text-anchor="middle" font-weight="normal" >0,29</text><line x1="642.5300000000001" y1="922" x2="642.5300000000001" y2="928" stroke="#bbb" stroke-width="1.2" /><text x="642.5300000000001" y="944.5" font-size="15" fill="#d8d8d8" text-anchor="middle" font-weight="normal" >0,3</text><line x1="691.5600000000001" y1="922" x2="691.5600000000001" y2="928" stroke="#bbb" stroke-width="1.2" /><text x="691.5600000000001" y="944.5" font-size="15" fill="#d8d8d8" text-anchor="middle" font-weight="normal" >0,31</text><line x1="740.5900000000001" y1="922" x2="740.5900000000001" y2="928" stroke="#bbb" stroke-width="1.2" /><text x="740.5900000000001" y="944.5" font-size="15" fill="#d8d8d8" text-anchor="middle" font-weight="normal" >0,32</text><line x1="789.6200000000001" y1="922" x2="789.6200000000001" y2="928" stroke="#bbb" stroke-width="1.2" /><text x="789.6200000000001" y="944.5" font-size="15" fill="#d8d8d8" text-anchor="middle" font-weight="normal" >0,33</text><rect x="840" y="735" width="889.5" height="1" fill="#000" /><rect x="840" y="736" width="889.5" height="15" fill="#2d2d2d" /><rect x="840" y="751" width="889.5" height="13.6" fill="#141414" /><text x="1030.7" y="756" font-size="15" fill="#f0f0f0" text-anchor="middle" font-weight="normal" >0</text><text x="1097.1000000000001" y="756" font-size="15" fill="#f0f0f0" text-anchor="middle" font-weight="normal" >10</text><text x="1163.5" y="756" font-size="15" fill="#f0f0f0" text-anchor="middle" font-weight="normal" >20</text><text x="1229.9" y="756" font-size="15" fill="#f0f0f0" text-anchor="middle" font-weight="normal" >30</text><text x="1296.3000000000002" y="756" font-size="15" fill="#f0f0f0" text-anchor="middle" font-weight="normal" >40</text><text x="1362.7" y="756" font-size="15" fill="#f0f0f0" text-anchor="middle" font-weight="normal" >50</text><text x="1429.1000000000001" y="756" font-size="15" fill="#f0f0f0" text-anchor="middle" font-weight="normal" >60</text><text x="1495.5" y="756" font-size="15" fill="#f0f0f0" text-anchor="middle" font-weight="normal" >70</text><text x="1561.9" y="756" font-size="15" fill="#f0f0f0" text-anchor="middle" font-weight="normal" >80</text><text x="1628.3000000000002" y="756" font-size="15" fill="#f0f0f0" text-anchor="middle" font-weight="normal" >90</text><text x="1694.7" y="756" font-size="15" fill="#f0f0f0" text-anchor="middle" font-weight="normal" >100</text><rect x="840" y="764.6" width="889.5" height="26.65" fill="#404040" /><text x="853.2" y="784.6" font-size="16.5" fill="#f4f4f4" text-anchor="start" font-weight="bold" >x: CIE31</text><text x="1001.7" y="784.6" font-size="16.3" fill="#f0f0f0" text-anchor="start" font-weight="normal" >0,29</text><text x="1068.1000000000001" y="784.6" font-size="16.3" fill="#f0f0f0" text-anchor="start" font-weight="normal" >0,32</text><text x="1134.5" y="784.6" font-size="16.3" fill="#f0f0f0" text-anchor="start" font-weight="normal" >0,32</text><text x="1200.9" y="784.6" font-size="16.3" fill="#f0f0f0" text-anchor="start" font-weight="normal" >0,32</text><text x="1267.3000000000002" y="784.6" font-size="16.3" fill="#f0f0f0" text-anchor="start" font-weight="normal" >0,32</text><text x="1333.7" y="784.6" font-size="16.3" fill="#f0f0f0" text-anchor="start" font-weight="normal" >0,32</text><text x="1400.1000000000001" y="784.6" font-size="16.3" fill="#f0f0f0" text-anchor="start" font-weight="normal" >0,32</text><text x="1466.5" y="784.6" font-size="16.3" fill="#f0f0f0" text-anchor="start" font-weight="normal" >0,32</text><text x="1532.9" y="784.6" font-size="16.3" fill="#f0f0f0" text-anchor="start" font-weight="normal" >0,32</text><text x="1599.3000000000002" y="784.6" font-size="16.3" fill="#f0f0f0" text-anchor="start" font-weight="normal" >0,32</text><text x="1665.7" y="784.6" font-size="16.3" fill="#f0f0f0" text-anchor="start" font-weight="normal" >0,33</text><rect x="840" y="791.25" width="889.5" height="26.65" fill="#7b7b7b" /><text x="853.2" y="811.25" font-size="16.5" fill="#f4f4f4" text-anchor="start" font-weight="bold" >y: CIE31</text><text x="1001.7" y="811.25" font-size="16.3" fill="#f0f0f0" text-anchor="start" font-weight="normal" >0,29</text><text x="1068.1000000000001" y="811.25" font-size="16.3" fill="#f0f0f0" text-anchor="start" font-weight="normal" >0,34</text><text x="1134.5" y="811.25" font-size="16.3" fill="#f0f0f0" text-anchor="start" font-weight="normal" >0,34</text><text x="1200.9" y="811.25" font-size="16.3" fill="#f0f0f0" text-anchor="start" font-weight="normal" >0,34</text><text x="1267.3000000000002" y="811.25" font-size="16.3" fill="#f0f0f0" text-anchor="start" font-weight="normal" >0,34</text><text x="1333.7" y="811.25" font-size="16.3" fill="#f0f0f0" text-anchor="start" font-weight="normal" >0,34</text><text x="1400.1000000000001" y="811.25" font-size="16.3" fill="#f0f0f0" text-anchor="start" font-weight="normal" >0,34</text><text x="1466.5" y="811.25" font-size="16.3" fill="#f0f0f0" text-anchor="start" font-weight="normal" >0,34</text><text x="1532.9" y="811.25" font-size="16.3" fill="#f0f0f0" text-anchor="start" font-weight="normal" >0,34</text><text x="1599.3000000000002" y="811.25" font-size="16.3" fill="#f0f0f0" text-anchor="start" font-weight="normal" >0,34</text><text x="1665.7" y="811.25" font-size="16.3" fill="#f0f0f0" text-anchor="start" font-weight="normal" >0,34</text><rect x="840" y="817.9" width="889.5" height="26.65" fill="#404040" /><text x="853.2" y="837.9" font-size="16.5" fill="#f4f4f4" text-anchor="start" font-weight="bold" >Y</text><text x="1001.7" y="837.9" font-size="16.3" fill="#f0f0f0" text-anchor="start" font-weight="normal" >0,20</text><text x="1068.1000000000001" y="837.9" font-size="16.3" fill="#f0f0f0" text-anchor="start" font-weight="normal" >4,70</text><text x="1134.5" y="837.9" font-size="16.3" fill="#f0f0f0" text-anchor="start" font-weight="normal" >20,12</text><text x="1200.9" y="837.9" font-size="16.3" fill="#f0f0f0" text-anchor="start" font-weight="normal" >43,16</text><text x="1267.3000000000002" y="837.9" font-size="16.3" fill="#f0f0f0" text-anchor="start" font-weight="normal" >73,95</text><text x="1333.7" y="837.9" font-size="16.3" fill="#f0f0f0" text-anchor="start" font-weight="normal" >110,68</text><text x="1400.1000000000001" y="837.9" font-size="16.3" fill="#f0f0f0" text-anchor="start" font-weight="normal" >164,07</text><text x="1466.5" y="837.9" font-size="16.3" fill="#f0f0f0" text-anchor="start" font-weight="normal" >227,17</text><text x="1532.9" y="837.9" font-size="16.3" fill="#f0f0f0" text-anchor="start" font-weight="normal" >305,65</text><text x="1599.3000000000002" y="837.9" font-size="16.3" fill="#f0f0f0" text-anchor="start" font-weight="normal" >389,90</text><text x="1665.7" y="837.9" font-size="16.3" fill="#f0f0f0" text-anchor="start" font-weight="normal" >464,18</text><rect x="840" y="844.55" width="889.5" height="26.65" fill="#7b7b7b" /><text x="853.2" y="864.55" font-size="16.5" fill="#f4f4f4" text-anchor="start" font-weight="bold" >Target Y</text><text x="1001.7" y="864.55" font-size="16.3" fill="#f0f0f0" text-anchor="start" font-weight="normal" >0,00</text><text x="1068.1000000000001" y="864.55" font-size="16.3" fill="#f0f0f0" text-anchor="start" font-weight="normal" >4,79</text><text x="1134.5" y="864.55" font-size="16.3" fill="#f0f0f0" text-anchor="start" font-weight="normal" >15,37</text><text x="1200.9" y="864.55" font-size="16.3" fill="#f0f0f0" text-anchor="start" font-weight="normal" >33,55</text><text x="1267.3000000000002" y="864.55" font-size="16.3" fill="#f0f0f0" text-anchor="start" font-weight="normal" >61,68</text><text x="1333.7" y="864.55" font-size="16.3" fill="#f0f0f0" text-anchor="start" font-weight="normal" >100,20</text><text x="1400.1000000000001" y="864.55" font-size="16.3" fill="#f0f0f0" text-anchor="start" font-weight="normal" >147,86</text><text x="1466.5" y="864.55" font-size="16.3" fill="#f0f0f0" text-anchor="start" font-weight="normal" >206,65</text><text x="1532.9" y="864.55" font-size="16.3" fill="#f0f0f0" text-anchor="start" font-weight="normal" >280,29</text><text x="1599.3000000000002" y="864.55" font-size="16.3" fill="#f0f0f0" text-anchor="start" font-weight="normal" >367,31</text><text x="1665.7" y="864.55" font-size="16.3" fill="#f0f0f0" text-anchor="start" font-weight="normal" >464,18</text><rect x="840" y="871.2" width="889.5" height="26.65" fill="#404040" /><text x="853.2" y="891.2" font-size="16.5" fill="#f4f4f4" text-anchor="start" font-weight="bold" >Gamma Log/Log</text><text x="1001.7" y="891.2" font-size="16.3" fill="#f0f0f0" text-anchor="start" font-weight="normal" >1,28</text><text x="1068.1000000000001" y="891.2" font-size="16.3" fill="#f0f0f0" text-anchor="start" font-weight="normal" >2,01</text><text x="1134.5" y="891.2" font-size="16.3" fill="#f0f0f0" text-anchor="start" font-weight="normal" >1,95</text><text x="1200.9" y="891.2" font-size="16.3" fill="#f0f0f0" text-anchor="start" font-weight="normal" >1,96</text><text x="1267.3000000000002" y="891.2" font-size="16.3" fill="#f0f0f0" text-anchor="start" font-weight="normal" >2,00</text><text x="1333.7" y="891.2" font-size="16.3" fill="#f0f0f0" text-anchor="start" font-weight="normal" >2,08</text><text x="1400.1000000000001" y="891.2" font-size="16.3" fill="#f0f0f0" text-anchor="start" font-weight="normal" >2,04</text><text x="1466.5" y="891.2" font-size="16.3" fill="#f0f0f0" text-anchor="start" font-weight="normal" >1,99</text><text x="1532.9" y="891.2" font-size="16.3" fill="#f0f0f0" text-anchor="start" font-weight="normal" >1,87</text><text x="1599.3000000000002" y="891.2" font-size="16.3" fill="#f0f0f0" text-anchor="start" font-weight="normal" >1,69</text><text x="1665.7" y="891.2" font-size="16.3" fill="#f0f0f0" text-anchor="start" font-weight="normal" >2,27</text><rect x="840" y="897.85" width="889.5" height="26.65" fill="#7b7b7b" /><text x="853.2" y="917.85" font-size="16.5" fill="#f4f4f4" text-anchor="start" font-weight="bold" >CCT</text><text x="1001.7" y="917.85" font-size="16.3" fill="#f0f0f0" text-anchor="start" font-weight="normal" >9350,00</text><text x="1068.1000000000001" y="917.85" font-size="16.3" fill="#f0f0f0" text-anchor="start" font-weight="normal" >6159,00</text><text x="1134.5" y="917.85" font-size="16.3" fill="#f0f0f0" text-anchor="start" font-weight="normal" >6095,00</text><text x="1200.9" y="917.85" font-size="16.3" fill="#f0f0f0" text-anchor="start" font-weight="normal" >6083,00</text><text x="1267.3000000000002" y="917.85" font-size="16.3" fill="#f0f0f0" text-anchor="start" font-weight="normal" >6077,00</text><text x="1333.7" y="917.85" font-size="16.3" fill="#f0f0f0" text-anchor="start" font-weight="normal" >6068,00</text><text x="1400.1000000000001" y="917.85" font-size="16.3" fill="#f0f0f0" text-anchor="start" font-weight="normal" >6053,00</text><text x="1466.5" y="917.85" font-size="16.3" fill="#f0f0f0" text-anchor="start" font-weight="normal" >6035,00</text><text x="1532.9" y="917.85" font-size="16.3" fill="#f0f0f0" text-anchor="start" font-weight="normal" >6004,00</text><text x="1599.3000000000002" y="917.85" font-size="16.3" fill="#f0f0f0" text-anchor="start" font-weight="normal" >5955,00</text><text x="1665.7" y="917.85" font-size="16.3" fill="#f0f0f0" text-anchor="start" font-weight="normal" >5839,00</text><rect x="840" y="924.5" width="889.5" height="26.65" fill="#404040" /><text x="853.2" y="944.5" font-size="16.5" fill="#f4f4f4" text-anchor="start" font-weight="bold" >ΔE 2000</text><text x="1001.7" y="944.5" font-size="16.3" fill="#f0f0f0" text-anchor="start" font-weight="normal" >0,33</text><text x="1068.1000000000001" y="944.5" font-size="16.3" fill="#f0f0f0" text-anchor="start" font-weight="normal" >1,20</text><text x="1134.5" y="944.5" font-size="16.3" fill="#f0f0f0" text-anchor="start" font-weight="normal" >3,29</text><text x="1200.9" y="944.5" font-size="16.3" fill="#f0f0f0" text-anchor="start" font-weight="normal" >4,36</text><text x="1267.3000000000002" y="944.5" font-size="16.3" fill="#f0f0f0" text-anchor="start" font-weight="normal" >4,63</text><text x="1333.7" y="944.5" font-size="16.3" fill="#f0f0f0" text-anchor="start" font-weight="normal" >3,92</text><text x="1400.1000000000001" y="944.5" font-size="16.3" fill="#f0f0f0" text-anchor="start" font-weight="normal" >4,12</text><text x="1466.5" y="944.5" font-size="16.3" fill="#f0f0f0" text-anchor="start" font-weight="normal" >4,16</text><text x="1532.9" y="944.5" font-size="16.3" fill="#f0f0f0" text-anchor="start" font-weight="normal" >4,36</text><text x="1599.3000000000002" y="944.5" font-size="16.3" fill="#f0f0f0" text-anchor="start" font-weight="normal" >4,67</text><text x="1665.7" y="944.5" font-size="16.3" fill="#f0f0f0" text-anchor="start" font-weight="normal" >5,66</text><rect x="1728.5" y="735" width="1.2" height="216" fill="#000" /><rect x="200.5" y="987.5" width="1396.5" height="62.5" fill="#2a2a2a" /><path d="M200.9 1050 V992 Q200.9 987.8 204.9 987.8 H321.9 Q325.9 987.8 325.9 992 V1050 Z" fill="url(#swbtn)" stroke="#777" stroke-width="0.8"/><rect x="205.9" y="993" width="115" height="36" rx="3.5" fill="#000000" stroke="#000" stroke-opacity="0.12" stroke-width="1"/><text x="263.4" y="1043.5" font-size="11" fill="#242424" text-anchor="middle" font-weight="bold" >0</text><path d="M327.6 1050 V992 Q327.6 987.8 331.6 987.8 H448.6 Q452.6 987.8 452.6 992 V1050 Z" fill="url(#swbtn)" stroke="#777" stroke-width="0.8"/><rect x="332.6" y="993" width="115" height="36" rx="3.5" fill="#1a1a1a" stroke="#000" stroke-opacity="0.12" stroke-width="1"/><text x="390.1" y="1043.5" font-size="11" fill="#242424" text-anchor="middle" font-weight="bold" >10</text><path d="M454.3 1050 V992 Q454.3 987.8 458.3 987.8 H575.3 Q579.3 987.8 579.3 992 V1050 Z" fill="url(#swbtn)" stroke="#777" stroke-width="0.8"/><rect x="459.3" y="993" width="115" height="36" rx="3.5" fill="#333333" stroke="#000" stroke-opacity="0.12" stroke-width="1"/><text x="516.8" y="1043.5" font-size="11" fill="#242424" text-anchor="middle" font-weight="bold" >20</text><path d="M581.0 1050 V992 Q581.0 987.8 585.0 987.8 H702.0 Q706.0 987.8 706.0 992 V1050 Z" fill="url(#swbtn)" stroke="#777" stroke-width="0.8"/><rect x="586.0" y="993" width="115" height="36" rx="3.5" fill="#4d4d4d" stroke="#000" stroke-opacity="0.12" stroke-width="1"/><text x="643.5" y="1043.5" font-size="11" fill="#242424" text-anchor="middle" font-weight="bold" >30</text><path d="M707.7 1050 V992 Q707.7 987.8 711.7 987.8 H828.7 Q832.7 987.8 832.7 992 V1050 Z" fill="url(#swbtn)" stroke="#777" stroke-width="0.8"/><rect x="712.7" y="993" width="115" height="36" rx="3.5" fill="#666666" stroke="#000" stroke-opacity="0.12" stroke-width="1"/><text x="770.2" y="1043.5" font-size="11" fill="#242424" text-anchor="middle" font-weight="bold" >40</text><path d="M834.4 1050 V992 Q834.4 987.8 838.4 987.8 H955.4 Q959.4 987.8 959.4 992 V1050 Z" fill="url(#swbtn)" stroke="#777" stroke-width="0.8"/><rect x="839.4" y="993" width="115" height="36" rx="3.5" fill="#808080" stroke="#000" stroke-opacity="0.12" stroke-width="1"/><text x="896.9" y="1043.5" font-size="11" fill="#242424" text-anchor="middle" font-weight="bold" >50</text><path d="M961.1 1050 V992 Q961.1 987.8 965.1 987.8 H1082.1 Q1086.1 987.8 1086.1 992 V1050 Z" fill="url(#swbtn)" stroke="#777" stroke-width="0.8"/><rect x="966.1" y="993" width="115" height="36" rx="3.5" fill="#999999" stroke="#000" stroke-opacity="0.12" stroke-width="1"/><text x="1023.6" y="1043.5" font-size="11" fill="#242424" text-anchor="middle" font-weight="bold" >60</text><path d="M1087.8 1050 V992 Q1087.8 987.8 1091.8 987.8 H1208.8 Q1212.8 987.8 1212.8 992 V1050 Z" fill="url(#swbtn)" stroke="#777" stroke-width="0.8"/><rect x="1092.8" y="993" width="115" height="36" rx="3.5" fill="#b3b3b3" stroke="#000" stroke-opacity="0.12" stroke-width="1"/><text x="1150.3" y="1043.5" font-size="11" fill="#242424" text-anchor="middle" font-weight="bold" >70</text><path d="M1214.5 1050 V992 Q1214.5 987.8 1218.5 987.8 H1335.5 Q1339.5 987.8 1339.5 992 V1050 Z" fill="url(#swbtn)" stroke="#777" stroke-width="0.8"/><rect x="1219.5" y="993" width="115" height="36" rx="3.5" fill="#cccccc" stroke="#000" stroke-opacity="0.12" stroke-width="1"/><text x="1277.0" y="1043.5" font-size="11" fill="#242424" text-anchor="middle" font-weight="bold" >80</text><path d="M1341.2 1050 V992 Q1341.2 987.8 1345.2 987.8 H1462.2 Q1466.2 987.8 1466.2 992 V1050 Z" fill="url(#swbtn)" stroke="#777" stroke-width="0.8"/><rect x="1346.2" y="993" width="115" height="36" rx="3.5" fill="#e6e6e6" stroke="#000" stroke-opacity="0.12" stroke-width="1"/><text x="1403.7" y="1043.5" font-size="11" fill="#242424" text-anchor="middle" font-weight="bold" >90</text><path d="M1467.9 1050 V992 Q1467.9 987.8 1471.9 987.8 H1588.9 Q1592.9 987.8 1592.9 992 V1050 Z" fill="#2c2c2c" stroke="#1c1c1c" stroke-width="1"/><rect x="1470.9" y="993" width="118" height="36" rx="3" fill="#ffffff"/><text x="1530.4" y="1043.5" font-size="11.5" fill="#ffffff" text-anchor="middle" font-weight="bold" >100</text><rect x="1596.7" y="987.6" width="315.3" height="62.4" fill="#1e1e1e" /><rect x="1597.5" y="987.6" width="47.5" height="18" fill="url(#ctlbtn)"/><rect x="1597.5" y="1006.5" width="47.5" height="43.5" fill="url(#ctlbtn)"/><circle cx="1621.1" cy="996" r="7" fill="#8a8a8a"/><path d="M1617 998.5 L1621.1 994 L1625.2 998.5 Z" fill="#222"/><rect x="1607" y="1013.5" width="28" height="28.5" rx="4" fill="#c6c6c6" stroke="#2a2a2a" stroke-width="2.6"/><rect x="1608.5" y="1028" width="25" height="12.6" rx="2" fill="#a4a4a4"/><rect x="1614.5" y="1021.2" width="13" height="7" fill="#1c1c1c" /><rect x="1614.5" y="1028" width="13" height="6.6" fill="#000" /><rect x="1646.1" y="987.6" width="45.600000000000136" height="30.3" fill="url(#ctlbtn)"/><circle cx="1669.1" cy="1002.7" r="9.5" fill="url(#knob2)"/><rect x="1692.7" y="987.6" width="44.09999999999991" height="30.3" fill="url(#ctlbtn)"/><circle cx="1714.6" cy="1002.7" r="9.5" fill="url(#knob2)"/><rect x="1737.8" y="987.6" width="44.100000000000136" height="30.3" fill="url(#ctlbtn)"/><circle cx="1759.2" cy="1002.7" r="9.5" fill="url(#knob2)"/><rect x="1782.9" y="987.6" width="44.0" height="30.3" fill="url(#ctlbtn)"/><circle cx="1804.6" cy="1002.7" r="9.5" fill="url(#knob2)"/><rect x="1827.9" y="987.6" width="44.09999999999991" height="30.3" fill="url(#ctlbtn)"/><circle cx="1849.3" cy="1002.7" r="9.5" fill="url(#knob2)"/><rect x="1873.0" y="987.6" width="44.5" height="30.3" fill="url(#ctlbtn)"/><circle cx="1895.6" cy="1002.7" r="9.5" fill="url(#knob2)"/><rect x="1665.6" y="999.2" width="7" height="7" fill="#222"/><path d="M1711.6 997.5 L1719.6 1002.7 L1711.6 1007.9 Z" fill="#222"/><path d="M1756.5 998.5 H1754.5 V1008 H1756.5 M1762.5 998.5 H1764.5 V1008 H1762.5" fill="none" stroke="#1e1e1e" stroke-width="1.8"/><rect x="1757.6" y="1002.3" width="1.6" height="1.6" fill="#1e1e1e" /><rect x="1760.4" y="1002.3" width="1.6" height="1.6" fill="#1e1e1e" /><path d="M1805 1003 C1803 1000 1799.5 1000 1799.5 1003 C1799.5 1006 1803 1006 1805 1003 C1807 1000 1810.5 1000 1810.5 1003 C1810.5 1006 1807 1006 1805 1003 Z" fill="none" stroke="#1e1e1e" stroke-width="1.9"/><path d="M1845 1002.5 A4.8 4.8 0 0 1 1853 999.5 M1854 1003.5 A4.8 4.8 0 0 1 1846 1006.5" fill="none" stroke="#1e1e1e" stroke-width="2.3"/><path d="M1851 997.5 L1855.5 998 L1854.5 1002 Z M1848 1008.5 L1843.5 1008 L1844.5 1004 Z" fill="#1e1e1e"/><rect x="1645.6" y="1018.4" width="136.3" height="31.6" fill="url(#ctlbtn)"/><rect x="1782.9" y="1018.4" width="129.1" height="31.6" fill="url(#ctlbtn)"/><circle cx="1676.7" cy="1033.9" r="9.5" fill="url(#knob2)"/><circle cx="1889.7" cy="1033.9" r="9.5" fill="url(#knob2)"/><path d="M1676 1029 L1672 1034 L1676 1039 M1681 1029 L1677 1034 L1681 1039" fill="none" stroke="#222" stroke-width="1.5"/><path d="M1886 1029 L1890 1034 L1886 1039 M1891 1029 L1895 1034 L1891 1039" fill="none" stroke="#222" stroke-width="1.5"/><text x="1703.6" y="1041.8" font-size="22" fill="#2c2c2c" text-anchor="start" font-weight="normal" textLength="49.7" lengthAdjust="spacingAndGlyphs" stroke="#2c2c2c" stroke-width="0.7">Back</text><text x="1810.5" y="1041.8" font-size="22" fill="#2c2c2c" text-anchor="start" font-weight="normal" textLength="51.4" lengthAdjust="spacingAndGlyphs" stroke="#2c2c2c" stroke-width="0.7">Next</text></svg></body></html>
